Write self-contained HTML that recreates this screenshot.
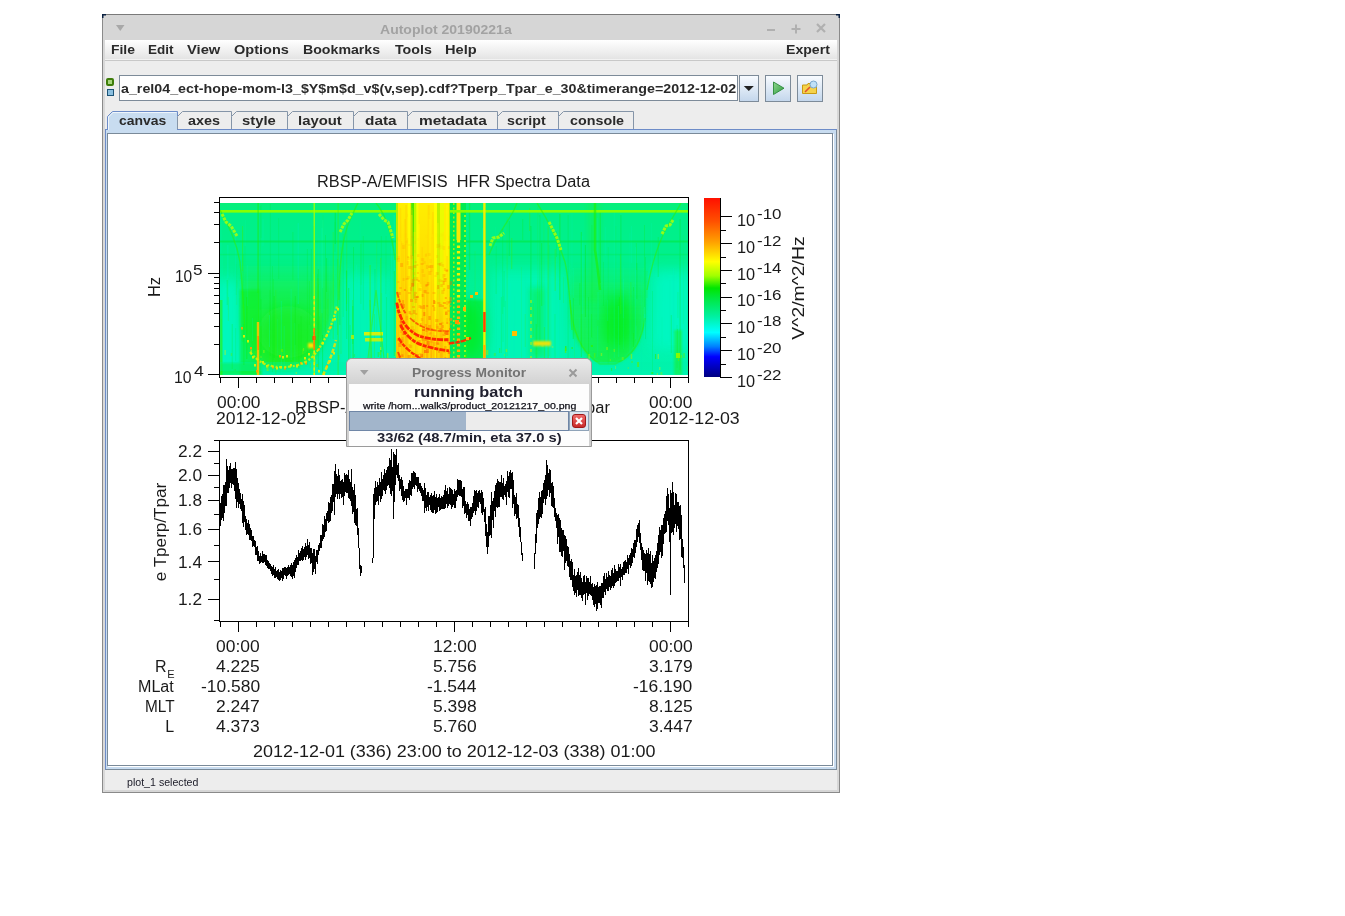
<!DOCTYPE html><html><head><meta charset="utf-8"><style>
*{margin:0;padding:0;box-sizing:border-box}
body{width:1345px;height:916px;background:#fff;position:relative;overflow:hidden;font-family:"Liberation Sans",sans-serif}
.a{position:absolute}
.t{position:absolute;white-space:pre;line-height:1}
</style></head><body>
<div class="a" style="left:102px;top:14px;width:738px;height:779px;background:#d8d8d8;border:1px solid #8a8a8a;border-top-color:#7a7a7a"></div><div class="a" style="left:103px;top:15px;width:736px;height:25px;background:#d6d6d6"></div><svg class="a" style="left:102px;top:14px" width="738" height="5"><path d="M0 0H4V1.5H1.5V4H0Z" fill="#0a2040"/><path d="M738 0H734V1.5H736.5V4H738Z" fill="#0a2040"/></svg><div class="t" style="left:379.50px;top:22.57px;font-size:13.5px;color:#a2a2a2;font-weight:bold;transform:scaleX(1.0386);transform-origin:0 0;">Autoplot 20190221a</div><svg class="a" style="left:115px;top:24px" width="12" height="10"><path d="M1 1 L9.5 1 L5.25 7 Z" fill="#a8a8a8"/></svg><div class="a" style="left:767px;top:29px;width:8px;height:2px;background:#b0b0b0"></div><svg class="a" style="left:790px;top:23px" width="12" height="12"><path d="M6 1.5V10.5M1.5 6H10.5" stroke="#b0b0b0" stroke-width="2"/></svg><svg class="a" style="left:815px;top:22px" width="12" height="12"><path d="M2 2L10 10M10 2L2 10" stroke="#b0b0b0" stroke-width="2.2"/></svg><div class="a" style="left:105px;top:40px;width:732px;height:19px;background:linear-gradient(#ffffff,#e4e4e4)"></div><div class="a" style="left:105px;top:59px;width:732px;height:1px;background:#f2f2f2"></div><div class="a" style="left:105px;top:60px;width:732px;height:1px;background:#c8c8c8"></div><div class="a" style="left:105px;top:61px;width:732px;height:729px;background:#ededed"></div><div class="t" style="left:111.20px;top:43.20px;font-size:13px;color:#2a2a2a;font-weight:bold;transform:scaleX(1.0702);transform-origin:0 0;">File</div><div class="t" style="left:148.20px;top:43.20px;font-size:13px;color:#2a2a2a;font-weight:bold;transform:scaleX(1.0379);transform-origin:0 0;">Edit</div><div class="t" style="left:186.90px;top:43.20px;font-size:13px;color:#2a2a2a;font-weight:bold;transform:scaleX(1.1343);transform-origin:0 0;">View</div><div class="t" style="left:234.40px;top:43.20px;font-size:13px;color:#2a2a2a;font-weight:bold;transform:scaleX(1.1167);transform-origin:0 0;">Options</div><div class="t" style="left:303.40px;top:43.20px;font-size:13px;color:#2a2a2a;font-weight:bold;transform:scaleX(1.0892);transform-origin:0 0;">Bookmarks</div><div class="t" style="left:394.60px;top:43.20px;font-size:13px;color:#2a2a2a;font-weight:bold;transform:scaleX(1.0930);transform-origin:0 0;">Tools</div><div class="t" style="left:445.00px;top:43.20px;font-size:13px;color:#2a2a2a;font-weight:bold;transform:scaleX(1.1228);transform-origin:0 0;">Help</div><div class="t" style="left:786.40px;top:43.20px;font-size:13px;color:#2a2a2a;font-weight:bold;transform:scaleX(1.0834);transform-origin:0 0;">Expert</div><div class="a" style="left:106px;top:78px;width:8px;height:8px;border:2px solid #3e7d0a;border-radius:2px;background:#a6d57c"></div><div class="a" style="left:107px;top:89px;width:7px;height:7px;border:1.5px solid #1d5477;background:#8cc0e0"></div><div class="a" style="left:119px;top:75px;width:619px;height:26px;background:#fff;border:1px solid #7d8b99;"></div><div class="t" style="left:121.00px;top:81.77px;font-size:13.5px;color:#2a2a2a;font-weight:bold;transform:scaleX(1.0563);transform-origin:0 0;">a_rel04_ect-hope-mom-l3_$Y$m$d_v$(v,sep).cdf?Tperp_Tpar_e_30&amp;timerange=2012-12-02</div><div class="a" style="left:739px;top:75px;width:20px;height:27px;background:linear-gradient(#f8fbff,#c4d7ec);border:1px solid #7d8b99"></div><svg class="a" style="left:743px;top:85px" width="12" height="8"><path d="M0.8 1 L10.8 1 L5.8 6 Z" fill="#222"/></svg><div class="a" style="left:765px;top:75px;width:26px;height:27px;background:linear-gradient(#f8fbff,#c4d7ec);border:1px solid #7d8b99"></div><svg class="a" style="left:770px;top:80px" width="16" height="16"><defs><linearGradient id="pg" x1="0" y1="0" x2="1" y2="1"><stop offset="0" stop-color="#8fd88f"/><stop offset="1" stop-color="#2e9a40"/></linearGradient></defs><path d="M3.5 2 L14 8.2 L3.5 14.5 Z" fill="url(#pg)" stroke="#2a8a3a" stroke-width="0.9"/></svg><div class="a" style="left:797px;top:75px;width:26px;height:27px;background:linear-gradient(#f8fbff,#c4d7ec);border:1px solid #7d8b99"></div><svg class="a" style="left:801px;top:80px" width="18" height="16"><path d="M1.5 5 L6 5 L7 3.5 L11 3.5 L11 5 L15.5 5 L15.5 13.5 L1.5 13.5 Z" fill="#f5d24a" stroke="#c99a12" stroke-width="1"/><path d="M4 12 L9 7" stroke="#e05030" stroke-width="1.6"/><circle cx="12.5" cy="4.5" r="3.5" fill="#bfe0f8" stroke="#7aa8cc" stroke-width="1"/></svg><div class="a" style="left:105px;top:129px;width:732px;height:641px;background:#c8dcf0;border:1px solid #6d8cc8;border-bottom-color:#7a8a99;border-right-color:#7a8a99"></div><div class="a" style="left:107px;top:133px;width:726px;height:633px;background:#fff;border:1px solid #7a8a99;box-shadow:1px 1px 0 #fff"></div><svg class="a" style="left:0;top:0" width="1345" height="916"><path d="M107.5 130 V116.5 L112.5 111.5 H177.5 V130" fill="#c8dcf0" stroke="#6d8cc8" stroke-width="1"/><path d="M108.5 130 V117 L113 112.5 H176.5" fill="none" stroke="#ffffff" stroke-width="1" opacity="0.7"/><path d="M177.5 129 V116.5 L182.5 111.5 H231.5 V129" fill="#ededed" stroke="#8595a8" stroke-width="1"/><path d="M231.5 129 V116.5 L236.5 111.5 H287.5 V129" fill="#ededed" stroke="#8595a8" stroke-width="1"/><path d="M287.5 129 V116.5 L292.5 111.5 H353.5 V129" fill="#ededed" stroke="#8595a8" stroke-width="1"/><path d="M353.5 129 V116.5 L358.5 111.5 H407.5 V129" fill="#ededed" stroke="#8595a8" stroke-width="1"/><path d="M407.5 129 V116.5 L412.5 111.5 H497.5 V129" fill="#ededed" stroke="#8595a8" stroke-width="1"/><path d="M497.5 129 V116.5 L502.5 111.5 H558.5 V129" fill="#ededed" stroke="#8595a8" stroke-width="1"/><path d="M558.5 129 V116.5 L563.5 111.5 H633.5 V129" fill="#ededed" stroke="#8595a8" stroke-width="1"/><path d="M105 129.5 H107.5 M177.5 129.5 H837" stroke="#6d8cc8" stroke-width="1"/></svg><div class="t" style="left:119.00px;top:114.10px;font-size:13px;color:#2a2a2a;font-weight:bold;transform:scaleX(1.0710);transform-origin:0 0;">canvas</div><div class="t" style="left:188.20px;top:114.10px;font-size:13px;color:#2a2a2a;font-weight:bold;transform:scaleX(1.1063);transform-origin:0 0;">axes</div><div class="t" style="left:242.00px;top:114.10px;font-size:13px;color:#2a2a2a;font-weight:bold;transform:scaleX(1.1404);transform-origin:0 0;">style</div><div class="t" style="left:298.40px;top:114.10px;font-size:13px;color:#2a2a2a;font-weight:bold;transform:scaleX(1.1441);transform-origin:0 0;">layout</div><div class="t" style="left:364.80px;top:114.10px;font-size:13px;color:#2a2a2a;font-weight:bold;transform:scaleX(1.1809);transform-origin:0 0;">data</div><div class="t" style="left:418.50px;top:114.10px;font-size:13px;color:#2a2a2a;font-weight:bold;transform:scaleX(1.1888);transform-origin:0 0;">metadata</div><div class="t" style="left:507.20px;top:114.10px;font-size:13px;color:#2a2a2a;font-weight:bold;transform:scaleX(1.0924);transform-origin:0 0;">script</div><div class="t" style="left:569.60px;top:114.10px;font-size:13px;color:#2a2a2a;font-weight:bold;transform:scaleX(1.1009);transform-origin:0 0;">console</div><div class="t" style="left:126.70px;top:776.69px;font-size:11px;color:#20202c;transform:scaleX(0.9652);transform-origin:0 0;">plot_1 selected</div><div class="a" style="left:105px;top:790px;width:734px;height:2px;background:#d6d6d6"></div><svg class="a" style="left:0;top:0" width="1345" height="916"><defs><clipPath id="spc"><rect x="220" y="203" width="468" height="172"/></clipPath><filter id="b3" x="-30%" y="-30%" width="160%" height="160%"><feGaussianBlur stdDeviation="3"/></filter><filter id="b6" x="-50%" y="-50%" width="200%" height="200%"><feGaussianBlur stdDeviation="7"/></filter><filter id="b1" x="-30%" y="-30%" width="160%" height="160%"><feGaussianBlur stdDeviation="0.8"/></filter><linearGradient id="sbg" x1="0" y1="0" x2="0" y2="1"><stop offset="0" stop-color="#08f078"/><stop offset="0.06" stop-color="#00f088"/><stop offset="0.35" stop-color="#00f08e"/><stop offset="0.6" stop-color="#00f29e"/><stop offset="1" stop-color="#00f4b0"/></linearGradient><linearGradient id="ycol" x1="0" y1="0" x2="0" y2="1"><stop offset="0" stop-color="#ffee00"/><stop offset="0.4" stop-color="#ffdc00"/><stop offset="0.7" stop-color="#ffc000"/><stop offset="1" stop-color="#ffa800"/></linearGradient><linearGradient id="bowlg" x1="0" y1="0" x2="0" y2="1"><stop offset="0" stop-color="#20f030" stop-opacity="0"/><stop offset="0.3" stop-color="#20f030" stop-opacity="0.6"/><stop offset="1" stop-color="#20f020" stop-opacity="0.95"/></linearGradient></defs><g clip-path="url(#spc)"><rect x="220" y="203" width="468" height="172" fill="url(#sbg)"/><g filter="url(#b6)" opacity="0.9"><rect x="212" y="280" width="28" height="100" fill="#00f8c0"/><rect x="342" y="275" width="48" height="105" fill="#00f6b8"/><rect x="492" y="270" width="72" height="110" fill="#00f6b8"/><rect x="652" y="270" width="40" height="80" fill="#00f8c4"/></g><g filter="url(#b3)"><path d="M240 258 L338 258 C338 290 334 315 325 335 C318 352 306 366 290 368 L268 368 C256 362 248 345 243 325 Z" fill="url(#bowlg)"/></g><filter id="b15" x="-30%" y="-30%" width="160%" height="160%"><feGaussianBlur stdDeviation="1.5"/></filter><path d="M569 262 L647 262 L645 318 C642 340 634 356 615 364 L600 364 C588 358 576 345 571 325 Z" fill="url(#bowlg)" filter="url(#b15)" opacity="0.7"/><path d="M570 300 C572 330 580 352 600 364 L615 364 C634 356 642 340 645 318" fill="none" stroke="#30f000" stroke-width="1.5" opacity="0.5"/><rect x="588" y="203" width="12" height="100" fill="#20f030" opacity="0.35" filter="url(#b3)"/><g filter="url(#b6)"><ellipse cx="288" cy="332" rx="30" ry="26" fill="#18ee10" opacity="0.5"/><ellipse cx="618" cy="322" rx="16" ry="28" fill="#00ec00" opacity="0.6"/><ellipse cx="470" cy="330" rx="13" ry="30" fill="#00ec10" opacity="0.7"/></g><rect x="240" y="290" width="20" height="85" fill="#10f020" opacity="0.55" filter="url(#b1)"/><rect x="220" y="363" width="42" height="12" fill="#10f030" opacity="0.6" filter="url(#b1)"/><rect x="220" y="300" width="2.5" height="75" fill="#30f000" opacity="0.6"/><rect x="220" y="362" width="468" height="9" fill="#00f2a8" opacity="0.35"/><rect x="313.6" y="226" width="1" height="52" fill="#00e800" opacity="0.29"/><rect x="468.4" y="292" width="1" height="26" fill="#00f4b0" opacity="0.17"/><rect x="558.0" y="278" width="1" height="81" fill="#00f0c0" opacity="0.32"/><rect x="319.5" y="262" width="1" height="37" fill="#00f4b0" opacity="0.14"/><rect x="555.4" y="289" width="1" height="26" fill="#00f0c0" opacity="0.13"/><rect x="481.1" y="257" width="0.7" height="56" fill="#00f4b0" opacity="0.23"/><rect x="641.3" y="280" width="0.7" height="93" fill="#00f0c0" opacity="0.17"/><rect x="650.9" y="223" width="0.7" height="124" fill="#00f4b0" opacity="0.34"/><rect x="529.0" y="208" width="1.3" height="23" fill="#40f000" opacity="0.31"/><rect x="258.0" y="257" width="1.3" height="28" fill="#00f0c0" opacity="0.12"/><rect x="374.3" y="269" width="1.3" height="37" fill="#00e800" opacity="0.17"/><rect x="340.5" y="254" width="1.3" height="97" fill="#00f0c0" opacity="0.23"/><rect x="246.1" y="297" width="1.3" height="62" fill="#10ee00" opacity="0.34"/><rect x="278.2" y="218" width="1" height="61" fill="#10ee00" opacity="0.15"/><rect x="317.1" y="274" width="1" height="82" fill="#10ee00" opacity="0.15"/><rect x="604.9" y="227" width="0.7" height="29" fill="#00f0c0" opacity="0.25"/><rect x="242.3" y="230" width="1" height="70" fill="#40f000" opacity="0.22"/><rect x="393.6" y="215" width="1.3" height="143" fill="#00f0c0" opacity="0.32"/><rect x="580.7" y="232" width="1.3" height="125" fill="#10ee00" opacity="0.29"/><rect x="269.5" y="290" width="1" height="40" fill="#10ee00" opacity="0.19"/><rect x="571.7" y="213" width="0.7" height="82" fill="#00f0c0" opacity="0.24"/><rect x="644.6" y="314" width="0.7" height="52" fill="#00f4b0" opacity="0.33"/><rect x="340.2" y="315" width="0.7" height="36" fill="#00f4b0" opacity="0.18"/><rect x="537.4" y="280" width="0.7" height="94" fill="#40f000" opacity="0.21"/><rect x="635.3" y="247" width="0.7" height="92" fill="#00f0c0" opacity="0.33"/><rect x="532.5" y="303" width="1.3" height="34" fill="#40f000" opacity="0.29"/><rect x="550.5" y="255" width="0.7" height="106" fill="#40f000" opacity="0.15"/><rect x="468.9" y="203" width="1.3" height="67" fill="#10ee00" opacity="0.30"/><rect x="316.1" y="298" width="1.3" height="62" fill="#40f000" opacity="0.24"/><rect x="510.1" y="283" width="0.7" height="75" fill="#00f0c0" opacity="0.29"/><rect x="687.8" y="305" width="0.7" height="24" fill="#00e800" opacity="0.22"/><rect x="392.8" y="274" width="1.3" height="97" fill="#00f4b0" opacity="0.19"/><rect x="574.1" y="329" width="0.7" height="41" fill="#40f000" opacity="0.18"/><rect x="374.0" y="314" width="1" height="57" fill="#40f000" opacity="0.25"/><rect x="554.6" y="249" width="1.3" height="42" fill="#40f000" opacity="0.31"/><rect x="547.5" y="226" width="1.3" height="137" fill="#40f000" opacity="0.33"/><rect x="636.2" y="263" width="1.3" height="36" fill="#00e800" opacity="0.18"/><rect x="227.2" y="245" width="1.3" height="74" fill="#00f0c0" opacity="0.29"/><rect x="486.6" y="271" width="1" height="73" fill="#00f4b0" opacity="0.22"/><rect x="297.7" y="278" width="0.7" height="24" fill="#00e800" opacity="0.20"/><rect x="327.6" y="299" width="0.7" height="29" fill="#40f000" opacity="0.28"/><rect x="596.9" y="218" width="1.3" height="44" fill="#00f0c0" opacity="0.20"/><rect x="481.9" y="228" width="1.3" height="91" fill="#00f0c0" opacity="0.34"/><rect x="470.4" y="297" width="0.7" height="27" fill="#10ee00" opacity="0.15"/><rect x="260.5" y="299" width="1" height="56" fill="#10ee00" opacity="0.32"/><rect x="555.5" y="281" width="0.7" height="76" fill="#00f4b0" opacity="0.20"/><rect x="244.7" y="246" width="1" height="88" fill="#10ee00" opacity="0.16"/><rect x="272.0" y="266" width="0.7" height="106" fill="#00e800" opacity="0.21"/><rect x="539.2" y="215" width="1.3" height="131" fill="#10ee00" opacity="0.22"/><rect x="591.1" y="314" width="0.7" height="23" fill="#10ee00" opacity="0.30"/><rect x="394.6" y="243" width="0.7" height="25" fill="#40f000" opacity="0.19"/><rect x="294.3" y="323" width="1" height="48" fill="#00f4b0" opacity="0.19"/><rect x="595.2" y="208" width="1" height="44" fill="#00f0c0" opacity="0.27"/><rect x="597.0" y="326" width="1.3" height="31" fill="#00f0c0" opacity="0.17"/><rect x="290.5" y="289" width="1.3" height="71" fill="#00f0c0" opacity="0.21"/><rect x="459.7" y="317" width="1" height="29" fill="#00f4b0" opacity="0.35"/><rect x="319.3" y="285" width="0.7" height="31" fill="#00f4b0" opacity="0.22"/><rect x="484.7" y="207" width="1.3" height="50" fill="#10ee00" opacity="0.19"/><rect x="682.9" y="235" width="0.7" height="89" fill="#40f000" opacity="0.12"/><rect x="521.2" y="267" width="0.7" height="103" fill="#40f000" opacity="0.16"/><rect x="329.2" y="258" width="0.7" height="66" fill="#00f4b0" opacity="0.21"/><rect x="294.8" y="296" width="1" height="49" fill="#00e800" opacity="0.26"/><rect x="644.1" y="225" width="0.7" height="82" fill="#10ee00" opacity="0.31"/><rect x="340.1" y="286" width="1.3" height="67" fill="#00f4b0" opacity="0.14"/><rect x="332.6" y="232" width="1.3" height="107" fill="#40f000" opacity="0.25"/><rect x="333.1" y="244" width="0.7" height="83" fill="#40f000" opacity="0.14"/><rect x="513.8" y="323" width="0.7" height="34" fill="#00f0c0" opacity="0.33"/><rect x="530.3" y="227" width="0.7" height="136" fill="#00f0c0" opacity="0.25"/><rect x="358.2" y="295" width="1" height="27" fill="#00f0c0" opacity="0.15"/><rect x="362.8" y="236" width="1" height="74" fill="#00e800" opacity="0.17"/><rect x="504.7" y="309" width="1" height="37" fill="#00f0c0" opacity="0.32"/><rect x="334.6" y="222" width="0.7" height="30" fill="#00e800" opacity="0.17"/><rect x="380.8" y="236" width="1" height="132" fill="#00e800" opacity="0.15"/><rect x="543.8" y="327" width="1.3" height="31" fill="#40f000" opacity="0.32"/><rect x="579.3" y="318" width="0.7" height="30" fill="#00f0c0" opacity="0.18"/><rect x="333.9" y="321" width="1.3" height="27" fill="#00f0c0" opacity="0.14"/><rect x="630.1" y="282" width="1.3" height="38" fill="#40f000" opacity="0.22"/><rect x="227.9" y="297" width="0.7" height="24" fill="#40f000" opacity="0.29"/><rect x="352.1" y="300" width="1" height="70" fill="#40f000" opacity="0.30"/><rect x="573.2" y="268" width="0.7" height="41" fill="#00f4b0" opacity="0.33"/><rect x="317.5" y="278" width="1" height="42" fill="#40f000" opacity="0.35"/><rect x="259.8" y="206" width="1" height="104" fill="#10ee00" opacity="0.16"/><rect x="633.3" y="287" width="0.7" height="60" fill="#00e800" opacity="0.30"/><rect x="322.1" y="288" width="1" height="87" fill="#00e800" opacity="0.31"/><rect x="631.3" y="226" width="0.7" height="37" fill="#00f0c0" opacity="0.28"/><rect x="269.0" y="310" width="1.3" height="54" fill="#40f000" opacity="0.14"/><rect x="345.9" y="270" width="1" height="41" fill="#10ee00" opacity="0.29"/><rect x="236.4" y="280" width="1" height="25" fill="#40f000" opacity="0.15"/><rect x="356.1" y="265" width="1" height="97" fill="#00f4b0" opacity="0.31"/><rect x="338.1" y="235" width="0.7" height="42" fill="#00f0c0" opacity="0.16"/><rect x="458.9" y="305" width="1.3" height="32" fill="#00f0c0" opacity="0.24"/><rect x="326.1" y="258" width="1" height="34" fill="#00e800" opacity="0.29"/><rect x="563.3" y="277" width="0.7" height="26" fill="#40f000" opacity="0.22"/><rect x="269.9" y="204" width="0.7" height="152" fill="#00e800" opacity="0.19"/><rect x="273.6" y="296" width="1.3" height="62" fill="#10ee00" opacity="0.28"/><rect x="308.9" y="281" width="1" height="44" fill="#10ee00" opacity="0.21"/><rect x="455.8" y="259" width="1.3" height="113" fill="#40f000" opacity="0.26"/><rect x="322.1" y="220" width="1.3" height="115" fill="#00f4b0" opacity="0.33"/><rect x="618.2" y="306" width="1" height="51" fill="#00f4b0" opacity="0.29"/><rect x="669.5" y="280" width="1.3" height="62" fill="#00f4b0" opacity="0.19"/><rect x="227.7" y="278" width="0.7" height="32" fill="#40f000" opacity="0.14"/><rect x="369.6" y="289" width="0.7" height="39" fill="#00f0c0" opacity="0.25"/><rect x="544.3" y="301" width="1" height="25" fill="#00f4b0" opacity="0.13"/><rect x="645.0" y="257" width="0.7" height="82" fill="#00e800" opacity="0.26"/><rect x="474.6" y="251" width="1" height="81" fill="#40f000" opacity="0.14"/><rect x="315.4" y="302" width="1.3" height="27" fill="#00f0c0" opacity="0.14"/><rect x="222.1" y="253" width="0.7" height="81" fill="#00f4b0" opacity="0.26"/><rect x="677.1" y="329" width="0.7" height="27" fill="#10ee00" opacity="0.27"/><rect x="679.4" y="219" width="1.3" height="151" fill="#00e800" opacity="0.24"/><rect x="342.7" y="234" width="1" height="83" fill="#10ee00" opacity="0.19"/><rect x="567.6" y="215" width="1" height="155" fill="#00e800" opacity="0.17"/><rect x="524.8" y="266" width="0.7" height="47" fill="#00f4b0" opacity="0.15"/><rect x="599.6" y="212" width="1.3" height="71" fill="#10ee00" opacity="0.33"/><rect x="386.3" y="297" width="0.7" height="77" fill="#00e800" opacity="0.31"/><rect x="559.0" y="321" width="1" height="35" fill="#00f4b0" opacity="0.23"/><rect x="556.1" y="231" width="0.7" height="26" fill="#10ee00" opacity="0.35"/><rect x="635.7" y="326" width="1" height="46" fill="#00f4b0" opacity="0.19"/><rect x="504.9" y="301" width="1" height="59" fill="#00e800" opacity="0.13"/><rect x="235.2" y="235" width="1" height="67" fill="#00f0c0" opacity="0.30"/><rect x="353.0" y="247" width="1" height="116" fill="#00e800" opacity="0.25"/><rect x="394.5" y="310" width="0.7" height="50" fill="#00f0c0" opacity="0.24"/><rect x="257.1" y="293" width="1.3" height="65" fill="#00f0c0" opacity="0.19"/><rect x="220.1" y="225" width="0.7" height="147" fill="#00f0c0" opacity="0.16"/><rect x="535.6" y="324" width="1.3" height="46" fill="#10ee00" opacity="0.32"/><rect x="360.3" y="244" width="1" height="60" fill="#10ee00" opacity="0.21"/><rect x="297.6" y="223" width="1.3" height="81" fill="#00f0c0" opacity="0.31"/><rect x="514.8" y="296" width="0.7" height="30" fill="#00f4b0" opacity="0.28"/><rect x="242.6" y="254" width="1" height="88" fill="#10ee00" opacity="0.17"/><rect x="275.1" y="290" width="1.3" height="84" fill="#40f000" opacity="0.19"/><rect x="677.4" y="292" width="1" height="26" fill="#10ee00" opacity="0.16"/><rect x="334.4" y="255" width="0.7" height="116" fill="#00f0c0" opacity="0.16"/><rect x="559.2" y="214" width="1.3" height="86" fill="#10ee00" opacity="0.34"/><rect x="456.6" y="324" width="1.3" height="40" fill="#40f000" opacity="0.32"/><rect x="349.6" y="325" width="1" height="39" fill="#10ee00" opacity="0.25"/><rect x="543.4" y="220" width="1" height="85" fill="#40f000" opacity="0.16"/><rect x="541.3" y="265" width="1" height="74" fill="#00f4b0" opacity="0.26"/><rect x="584.6" y="264" width="0.7" height="107" fill="#40f000" opacity="0.15"/><rect x="635.9" y="243" width="0.7" height="27" fill="#10ee00" opacity="0.32"/><rect x="277.0" y="319" width="0.7" height="36" fill="#00f4b0" opacity="0.15"/><rect x="495.5" y="227" width="0.7" height="142" fill="#00f0c0" opacity="0.20"/><rect x="676.7" y="325" width="0.7" height="43" fill="#00e800" opacity="0.17"/><rect x="502.4" y="229" width="0.7" height="85" fill="#00e800" opacity="0.23"/><rect x="607.8" y="247" width="1" height="117" fill="#10ee00" opacity="0.12"/><rect x="298.4" y="324" width="1" height="45" fill="#10ee00" opacity="0.33"/><rect x="352.1" y="306" width="1.3" height="38" fill="#10ee00" opacity="0.28"/><rect x="376.4" y="241" width="0.7" height="93" fill="#40f000" opacity="0.23"/><rect x="339.3" y="280" width="1" height="45" fill="#00e800" opacity="0.28"/><rect x="652.3" y="291" width="0.7" height="80" fill="#00e800" opacity="0.21"/><rect x="391.0" y="246" width="1.3" height="49" fill="#00f0c0" opacity="0.33"/><rect x="657.6" y="237" width="1.3" height="40" fill="#10ee00" opacity="0.19"/><rect x="646.6" y="271" width="0.7" height="27" fill="#40f000" opacity="0.30"/><rect x="538.6" y="217" width="0.7" height="74" fill="#00f0c0" opacity="0.32"/><rect x="245.1" y="220" width="1" height="54" fill="#00f4b0" opacity="0.16"/><rect x="524.7" y="314" width="1" height="33" fill="#40f000" opacity="0.23"/><rect x="591.3" y="225" width="1.3" height="113" fill="#00e800" opacity="0.13"/><rect x="235.4" y="328" width="0.7" height="33" fill="#00e800" opacity="0.19"/><rect x="385.6" y="236" width="0.7" height="58" fill="#10ee00" opacity="0.18"/><rect x="272.9" y="279" width="0.7" height="81" fill="#10ee00" opacity="0.27"/><rect x="541.0" y="243" width="1.3" height="63" fill="#10ee00" opacity="0.31"/><rect x="629.4" y="233" width="1" height="134" fill="#00f4b0" opacity="0.18"/><rect x="670.8" y="315" width="1" height="38" fill="#10ee00" opacity="0.24"/><rect x="554.6" y="314" width="0.7" height="60" fill="#10ee00" opacity="0.25"/><rect x="555.9" y="225" width="1" height="148" fill="#00f0c0" opacity="0.12"/><rect x="260.8" y="205" width="0.7" height="33" fill="#00e800" opacity="0.14"/><rect x="558.5" y="320" width="1" height="48" fill="#00f0c0" opacity="0.16"/><rect x="242.0" y="226" width="1" height="45" fill="#40f000" opacity="0.33"/><rect x="385.9" y="291" width="1.3" height="63" fill="#00f0c0" opacity="0.13"/><rect x="321.3" y="228" width="1.3" height="85" fill="#00f0c0" opacity="0.27"/><rect x="506.5" y="217" width="1.3" height="139" fill="#40f000" opacity="0.17"/><rect x="235.8" y="264" width="0.7" height="31" fill="#10ee00" opacity="0.15"/><rect x="513.1" y="310" width="0.7" height="46" fill="#00f0c0" opacity="0.30"/><rect x="317.8" y="269" width="1.3" height="100" fill="#00e800" opacity="0.26"/><rect x="537.5" y="261" width="1" height="46" fill="#00f4b0" opacity="0.24"/><rect x="280.8" y="301" width="1" height="73" fill="#00f4b0" opacity="0.33"/><rect x="571.9" y="298" width="0.7" height="65" fill="#00f4b0" opacity="0.32"/><rect x="252.0" y="318" width="0.7" height="23" fill="#00f4b0" opacity="0.32"/><rect x="467.2" y="269" width="0.7" height="56" fill="#00f0c0" opacity="0.18"/><rect x="306.9" y="249" width="0.7" height="116" fill="#00e800" opacity="0.26"/><rect x="572.7" y="298" width="1.3" height="41" fill="#10ee00" opacity="0.30"/><rect x="383.3" y="311" width="1" height="62" fill="#00f0c0" opacity="0.27"/><rect x="318.2" y="238" width="1.3" height="46" fill="#00f4b0" opacity="0.14"/><rect x="597.4" y="292" width="1.3" height="28" fill="#00f0c0" opacity="0.18"/><rect x="661.8" y="317" width="1" height="28" fill="#00f4b0" opacity="0.29"/><rect x="464.2" y="239" width="1" height="119" fill="#00e800" opacity="0.29"/><rect x="511.0" y="238" width="1.3" height="31" fill="#40f000" opacity="0.31"/><rect x="503.5" y="271" width="1.3" height="36" fill="#00e800" opacity="0.14"/><rect x="269.0" y="315" width="1" height="32" fill="#00f4b0" opacity="0.30"/><rect x="630.6" y="297" width="0.7" height="77" fill="#00f4b0" opacity="0.22"/><rect x="622.9" y="279" width="0.7" height="39" fill="#00f0c0" opacity="0.28"/><rect x="231.6" y="324" width="1.3" height="45" fill="#10ee00" opacity="0.19"/><rect x="483.4" y="304" width="1" height="49" fill="#00e800" opacity="0.17"/><rect x="603.3" y="262" width="0.7" height="44" fill="#00e800" opacity="0.17"/><rect x="260.6" y="251" width="0.7" height="75" fill="#00f4b0" opacity="0.17"/><rect x="359.6" y="217" width="1" height="143" fill="#00f0c0" opacity="0.15"/><rect x="607.1" y="321" width="1.3" height="22" fill="#10ee00" opacity="0.19"/><rect x="313.2" y="274" width="1" height="79" fill="#00f4b0" opacity="0.33"/><rect x="502.7" y="296" width="0.7" height="46" fill="#10ee00" opacity="0.21"/><rect x="632.9" y="291" width="1.3" height="42" fill="#00f4b0" opacity="0.13"/><rect x="537.3" y="206" width="1.3" height="121" fill="#40f000" opacity="0.13"/><rect x="322.4" y="215" width="1" height="103" fill="#40f000" opacity="0.12"/><rect x="325.3" y="235" width="0.7" height="98" fill="#10ee00" opacity="0.27"/><rect x="366.5" y="286" width="1.3" height="83" fill="#00f0c0" opacity="0.13"/><rect x="579.3" y="283" width="1" height="22" fill="#10ee00" opacity="0.25"/><rect x="644.0" y="314" width="1.3" height="25" fill="#00f0c0" opacity="0.19"/><rect x="346.2" y="219" width="1" height="85" fill="#40f000" opacity="0.26"/><rect x="588.1" y="297" width="0.7" height="74" fill="#00e800" opacity="0.31"/><rect x="672.9" y="268" width="1.3" height="65" fill="#00f0c0" opacity="0.31"/><rect x="619.1" y="297" width="1" height="48" fill="#10ee00" opacity="0.33"/><rect x="237.1" y="288" width="1.3" height="58" fill="#00f4b0" opacity="0.26"/><rect x="314.4" y="314" width="0.7" height="41" fill="#10ee00" opacity="0.16"/><rect x="584.9" y="245" width="1" height="72" fill="#00e800" opacity="0.35"/><rect x="500.9" y="297" width="0.7" height="56" fill="#10ee00" opacity="0.29"/><rect x="292.2" y="232" width="1.3" height="48" fill="#10ee00" opacity="0.15"/><rect x="340.5" y="247" width="1" height="107" fill="#40f000" opacity="0.25"/><rect x="620.2" y="215" width="1.3" height="90" fill="#00e800" opacity="0.21"/><rect x="522.2" y="219" width="1" height="21" fill="#10ee00" opacity="0.24"/><rect x="380.0" y="258" width="1.3" height="102" fill="#40f000" opacity="0.32"/><rect x="393.7" y="232" width="1.3" height="109" fill="#00f0c0" opacity="0.28"/><rect x="508.7" y="221" width="1.3" height="35" fill="#00e800" opacity="0.20"/><rect x="237.2" y="290" width="0.7" height="39" fill="#00f0c0" opacity="0.29"/><rect x="334.6" y="210" width="1.3" height="34" fill="#00e800" opacity="0.32"/><rect x="464.1" y="241" width="0.7" height="31" fill="#40f000" opacity="0.16"/><rect x="283.6" y="326" width="1.3" height="40" fill="#00f0c0" opacity="0.18"/><rect x="613.7" y="212" width="1" height="146" fill="#00f4b0" opacity="0.28"/><rect x="380.9" y="293" width="1.3" height="56" fill="#40f000" opacity="0.15"/><rect x="226.7" y="280" width="1" height="25" fill="#10ee00" opacity="0.24"/><rect x="465.9" y="316" width="1.3" height="45" fill="#40f000" opacity="0.22"/><rect x="312.5" y="280" width="0.7" height="43" fill="#40f000" opacity="0.12"/><rect x="495.6" y="246" width="1" height="48" fill="#10ee00" opacity="0.19"/><rect x="262.4" y="219" width="1.3" height="27" fill="#00f0c0" opacity="0.20"/><rect x="615.5" y="226" width="0.7" height="112" fill="#10ee00" opacity="0.13"/><rect x="241.6" y="305" width="1" height="36" fill="#40f000" opacity="0.18"/><rect x="393.7" y="271" width="1.3" height="85" fill="#10ee00" opacity="0.31"/><rect x="348.2" y="288" width="1" height="80" fill="#00e800" opacity="0.34"/><rect x="220.8" y="213" width="0.7" height="106" fill="#00f4b0" opacity="0.33"/><rect x="530.2" y="226" width="1.3" height="90" fill="#00e800" opacity="0.28"/><rect x="336.9" y="259" width="1" height="76" fill="#10ee00" opacity="0.21"/><rect x="581.7" y="236" width="1.3" height="78" fill="#00f4b0" opacity="0.24"/><rect x="562.2" y="292" width="0.7" height="55" fill="#00f0c0" opacity="0.25"/><rect x="652.9" y="256" width="1" height="86" fill="#00f0c0" opacity="0.24"/><rect x="360.6" y="242" width="1" height="43" fill="#10ee00" opacity="0.14"/><rect x="243.4" y="324" width="1" height="41" fill="#10ee00" opacity="0.32"/><rect x="619.9" y="254" width="1.3" height="60" fill="#40f000" opacity="0.23"/><rect x="245.1" y="274" width="0.7" height="67" fill="#00f4b0" opacity="0.13"/><rect x="247.4" y="265" width="0.7" height="41" fill="#00f0c0" opacity="0.28"/><rect x="548.8" y="245" width="0.7" height="111" fill="#00e800" opacity="0.15"/><rect x="300.7" y="316" width="0.7" height="42" fill="#00e800" opacity="0.25"/><rect x="623.0" y="267" width="0.7" height="82" fill="#00f0c0" opacity="0.19"/><rect x="607.1" y="300" width="1" height="21" fill="#00f0c0" opacity="0.15"/><rect x="310.9" y="249" width="1" height="51" fill="#10ee00" opacity="0.19"/><rect x="346.2" y="271" width="1" height="68" fill="#00e800" opacity="0.26"/><rect x="453.6" y="274" width="0.7" height="28" fill="#00f0c0" opacity="0.16"/><rect x="220" y="210" width="468" height="2.6" fill="#88ff00"/><rect x="220" y="240.5" width="468" height="2" fill="#00e840" opacity="0.6"/><rect x="220" y="253.8" width="468" height="1.5" fill="#00ea50" opacity="0.35"/><path d="M220 210 C226 222 236 238 240 262 C242 280 243 300 245 330" fill="none" stroke="#30f000" stroke-width="1.4" opacity="0.5"/><path d="M339 300 C339 270 342 236 350 220 C354 212 356 206 358 203" fill="none" stroke="#30f000" stroke-width="1.4" opacity="0.5"/><path d="M376 203 C386 215 392 232 395 260" fill="none" stroke="#30f000" stroke-width="1.4" opacity="0.5"/><path d="M489 255 C495 238 508 222 514 210 L517 203" fill="none" stroke="#30f000" stroke-width="1.4" opacity="0.5"/><path d="M537 203 C548 220 558 240 565 262 C569 280 570 300 572 330" fill="none" stroke="#30f000" stroke-width="1.4" opacity="0.5"/><path d="M647 290 C652 262 660 238 670 222 C676 212 679 207 681 203" fill="none" stroke="#30f000" stroke-width="1.4" opacity="0.5"/><path d="M595 203 L595 250 C597 262 599 280 600 290" fill="none" stroke="#20f000" stroke-width="2.5" opacity="0.6"/><path d="M222 214 L226 222 L231 226 L237 236" fill="none" stroke="#b8ff00" stroke-width="3" stroke-dasharray="3 1" opacity="0.8"/><path d="M340 232 L344 224 L348 220 L352 213" fill="none" stroke="#b8ff00" stroke-width="3" stroke-dasharray="3 1" opacity="0.8"/><path d="M379 214 L384 220 L388 222 L393 238" fill="none" stroke="#b8ff00" stroke-width="3" stroke-dasharray="3 1" opacity="0.8"/><path d="M490 246 L493 238 L499 237 L504 233" fill="none" stroke="#b8ff00" stroke-width="3" stroke-dasharray="3 1" opacity="0.8"/><path d="M549 222 L553 230 L557 238 L561 250" fill="none" stroke="#b8ff00" stroke-width="3" stroke-dasharray="3 1" opacity="0.8"/><path d="M662 234 L666 226 L670 225 L673 220" fill="none" stroke="#b8ff00" stroke-width="3" stroke-dasharray="3 1" opacity="0.8"/><rect x="313.6" y="203" width="1.2" height="172" fill="#a8ff00"/><path d="M314.2 296V375" stroke="#ffe000" stroke-width="1.3" stroke-dasharray="3 2.5"/><rect x="257.4" y="203" width="1.4" height="172" fill="#20f000" opacity="0.5"/><rect x="256.8" y="322" width="2.4" height="53" fill="#ffc000" opacity="0.9"/><rect x="257.4" y="336" width="1.6" height="14" fill="#ff8000" opacity="0.8"/><rect x="450" y="203" width="16" height="172" fill="#00e840" opacity="0.7"/><rect x="466" y="300" width="18" height="75" fill="#00ec20" opacity="0.55" filter="url(#b1)"/><path d="M453.8 203V375" stroke="#c0f000" stroke-width="1.3" stroke-dasharray="2 2.5"/><rect x="456.5" y="203" width="4" height="37" fill="#f8e800"/><path d="M458.5 240V300" stroke="#f0f000" stroke-width="3.2" stroke-dasharray="2.5 3"/><path d="M458.5 300V375" stroke="#ffb000" stroke-width="3.2" stroke-dasharray="2.5 3"/><path d="M465 210V375" stroke="#d8ff00" stroke-width="1.4" stroke-dasharray="2 3"/><rect x="449" y="210" width="17" height="2.6" fill="#88ff00"/><rect x="483.2" y="203" width="2.4" height="172" fill="#f0f000"/><rect x="483.2" y="312" width="2.4" height="20" fill="#ff4000"/><rect x="483.2" y="345" width="2.4" height="30" fill="#ffb000"/><rect x="396" y="203" width="54" height="172" fill="url(#ycol)"/><linearGradient id="sfade" x1="0" y1="0" x2="0" y2="1"><stop offset="0" stop-color="#fff" stop-opacity="1"/><stop offset="0.45" stop-color="#fff" stop-opacity="0.9"/><stop offset="0.75" stop-color="#fff" stop-opacity="0.15"/><stop offset="1" stop-color="#fff" stop-opacity="0.1"/></linearGradient><mask id="smask"><rect x="390" y="203" width="70" height="172" fill="url(#sfade)"/></mask><g mask="url(#smask)"><rect x="396" y="203" width="2" height="172" fill="#a0f000" opacity="0.85"/><rect x="408" y="203" width="2" height="172" fill="#ffff00" opacity="0.85"/><rect x="410.5" y="203" width="1" height="172" fill="#b0f000" opacity="0.85"/><rect x="411.2" y="203" width="2.8" height="172" fill="#28e800" opacity="0.85"/><rect x="414" y="203" width="2" height="172" fill="#a8ff00" opacity="0.85"/><rect x="416" y="203" width="2" height="172" fill="#e0ff00" opacity="0.85"/><rect x="434" y="203" width="3" height="172" fill="#ffff00" opacity="0.85"/><rect x="437" y="203" width="3" height="172" fill="#b0f000" opacity="0.85"/><rect x="440" y="203" width="4" height="172" fill="#e8ff00" opacity="0.85"/><rect x="444" y="203" width="5" height="172" fill="#fff000" opacity="0.85"/><rect x="449" y="203" width="1" height="172" fill="#a0f000" opacity="0.85"/></g><rect x="417" y="203" width="1.5" height="172" fill="#ffff00" opacity="0.7"/><rect x="434.5" y="203" width="1.5" height="172" fill="#ffff00" opacity="0.7"/><rect x="446.6" y="237" width="1.5" height="138" fill="#ffff00" opacity="0.26"/><rect x="421.5" y="247" width="1.5" height="128" fill="#ffc000" opacity="0.26"/><rect x="422.1" y="286" width="2" height="89" fill="#ffd000" opacity="0.40"/><rect x="404.4" y="219" width="1.5" height="156" fill="#ffc000" opacity="0.36"/><rect x="402.3" y="292" width="1" height="83" fill="#fff000" opacity="0.20"/><rect x="399.6" y="208" width="1.5" height="167" fill="#ffd000" opacity="0.45"/><rect x="428.2" y="215" width="2" height="160" fill="#ffff00" opacity="0.24"/><rect x="438.6" y="247" width="1" height="128" fill="#ffff00" opacity="0.40"/><rect x="438.5" y="288" width="1" height="87" fill="#ffd000" opacity="0.50"/><rect x="398.6" y="206" width="2" height="169" fill="#ffe800" opacity="0.22"/><rect x="407.8" y="265" width="2" height="110" fill="#ffe800" opacity="0.35"/><rect x="411.0" y="215" width="1.5" height="160" fill="#fff000" opacity="0.41"/><rect x="399.3" y="238" width="2" height="137" fill="#ffe800" opacity="0.41"/><rect x="396.4" y="260" width="2" height="115" fill="#ffff00" opacity="0.25"/><rect x="401.2" y="241" width="1" height="134" fill="#ffd000" opacity="0.42"/><rect x="443.4" y="241" width="2" height="134" fill="#ffff00" opacity="0.30"/><rect x="413.6" y="232" width="2" height="143" fill="#ffe800" opacity="0.41"/><rect x="438.2" y="294" width="2" height="81" fill="#ffd000" opacity="0.48"/><rect x="425.8" y="285" width="2" height="90" fill="#ffd000" opacity="0.29"/><rect x="428.2" y="293" width="1" height="82" fill="#ffd000" opacity="0.31"/><rect x="411.4" y="210" width="1" height="165" fill="#ffc000" opacity="0.41"/><rect x="416.3" y="295" width="2" height="80" fill="#ffc000" opacity="0.36"/><rect x="445.7" y="275" width="2" height="100" fill="#ffff00" opacity="0.48"/><rect x="403.0" y="243" width="2" height="132" fill="#ffe800" opacity="0.30"/><rect x="417.3" y="255" width="1.5" height="120" fill="#ffe800" opacity="0.32"/><rect x="402.2" y="245" width="1.5" height="130" fill="#ffc000" opacity="0.36"/><rect x="433.1" y="237" width="1" height="138" fill="#ffe800" opacity="0.23"/><rect x="408.3" y="261" width="2" height="114" fill="#ffe800" opacity="0.38"/><rect x="445.9" y="205" width="2" height="170" fill="#ffff00" opacity="0.44"/><rect x="407.2" y="214" width="1" height="161" fill="#ffd000" opacity="0.21"/><rect x="413.2" y="291" width="2" height="84" fill="#ffc000" opacity="0.26"/><rect x="418.0" y="224" width="2" height="151" fill="#ffff00" opacity="0.42"/><rect x="419.2" y="250" width="1" height="125" fill="#ffe800" opacity="0.39"/><rect x="415.7" y="280" width="1" height="95" fill="#ffff00" opacity="0.41"/><rect x="445.1" y="280" width="2" height="95" fill="#ffe800" opacity="0.29"/><rect x="432.4" y="212" width="1" height="163" fill="#ffc000" opacity="0.40"/><rect x="446.2" y="256" width="2" height="119" fill="#ffd000" opacity="0.46"/><rect x="408.9" y="275" width="1" height="100" fill="#ffe800" opacity="0.34"/><rect x="406.8" y="217" width="1" height="158" fill="#ffff00" opacity="0.41"/><rect x="425.0" y="294" width="1" height="81" fill="#ffff00" opacity="0.45"/><rect x="407.1" y="238" width="1" height="137" fill="#ffc000" opacity="0.23"/><rect x="405.3" y="205" width="1.5" height="170" fill="#ffc000" opacity="0.33"/><rect x="408.5" y="286" width="1.5" height="89" fill="#ffff00" opacity="0.33"/><rect x="402.0" y="210" width="1" height="165" fill="#fff000" opacity="0.22"/><rect x="432.2" y="234" width="1.5" height="141" fill="#ffe800" opacity="0.38"/><rect x="436.9" y="287" width="1" height="88" fill="#ffc000" opacity="0.30"/><rect x="404.3" y="226" width="1" height="149" fill="#ffe800" opacity="0.28"/><rect x="428.4" y="219" width="2" height="156" fill="#ffff00" opacity="0.44"/><rect x="442.6" y="232" width="2" height="143" fill="#ffe800" opacity="0.40"/><rect x="411.6" y="208" width="1" height="167" fill="#ffd000" opacity="0.26"/><rect x="420.0" y="287" width="2" height="88" fill="#ffff00" opacity="0.44"/><rect x="427.7" y="205" width="2" height="170" fill="#ffc000" opacity="0.32"/><rect x="417.0" y="283" width="1.5" height="92" fill="#ffc000" opacity="0.41"/><rect x="437.1" y="223" width="1.5" height="152" fill="#ffff00" opacity="0.30"/><rect x="406.0" y="290" width="2" height="85" fill="#ffc000" opacity="0.47"/><rect x="417.1" y="243" width="1.5" height="132" fill="#ffe800" opacity="0.22"/><rect x="419.5" y="284" width="2" height="91" fill="#ffff00" opacity="0.48"/><rect x="415.7" y="273" width="1" height="102" fill="#ffe800" opacity="0.21"/><rect x="431.8" y="234" width="1" height="141" fill="#fff000" opacity="0.32"/><rect x="439.1" y="237" width="1" height="138" fill="#ffd000" opacity="0.21"/><rect x="410.2" y="300" width="1.5" height="75" fill="#ffe800" opacity="0.49"/><rect x="410.1" y="246" width="2" height="129" fill="#ffd000" opacity="0.45"/><rect x="412.2" y="256" width="1" height="119" fill="#ffff00" opacity="0.41"/><rect x="447.3" y="286" width="1.5" height="89" fill="#ffd000" opacity="0.25"/><rect x="409.5" y="204" width="1" height="171" fill="#ffff00" opacity="0.38"/><rect x="447.9" y="212" width="1" height="163" fill="#fff000" opacity="0.46"/><rect x="413.0" y="299" width="2" height="76" fill="#fff000" opacity="0.46"/><rect x="412.0" y="279" width="2" height="96" fill="#ffe800" opacity="0.23"/><rect x="420.3" y="294" width="1" height="81" fill="#fff000" opacity="0.26"/><rect x="423.1" y="281" width="2" height="94" fill="#ffd000" opacity="0.49"/><rect x="400.5" y="355" width="3" height="2" fill="#ff9000" opacity="0.34"/><rect x="397.6" y="256" width="2" height="3" fill="#ff6000" opacity="0.11"/><rect x="401.2" y="243" width="2.5" height="2" fill="#ff9000" opacity="0.10"/><rect x="407.9" y="292" width="3" height="2" fill="#ff8000" opacity="0.33"/><rect x="408.2" y="266" width="3" height="3" fill="#ff6000" opacity="0.23"/><rect x="445.7" y="332" width="3" height="3" fill="#ff9000" opacity="0.52"/><rect x="444.1" y="346" width="2.5" height="3" fill="#ffa000" opacity="0.65"/><rect x="436.2" y="255" width="2" height="3" fill="#ffa000" opacity="0.20"/><rect x="405.6" y="316" width="2.5" height="4" fill="#ffa000" opacity="0.53"/><rect x="431.9" y="232" width="2" height="4" fill="#ff8000" opacity="0.01"/><rect x="432.5" y="292" width="3" height="2" fill="#ff9000" opacity="0.35"/><rect x="440.3" y="284" width="2.5" height="3" fill="#ffa000" opacity="0.43"/><rect x="418.5" y="305" width="3" height="3" fill="#ffa000" opacity="0.50"/><rect x="443.6" y="274" width="2" height="3" fill="#ff6000" opacity="0.22"/><rect x="441.6" y="305" width="2.5" height="2" fill="#ff8000" opacity="0.44"/><rect x="408.6" y="311" width="2.5" height="3" fill="#ffa000" opacity="0.65"/><rect x="447.6" y="366" width="2" height="2" fill="#ffa000" opacity="0.65"/><rect x="447.7" y="351" width="3" height="3" fill="#ff6000" opacity="0.55"/><rect x="433.3" y="307" width="2" height="4" fill="#ff9000" opacity="0.46"/><rect x="401.8" y="245" width="3" height="4" fill="#ff6000" opacity="0.10"/><rect x="419.6" y="323" width="2" height="4" fill="#ff6000" opacity="0.37"/><rect x="399.8" y="320" width="2.5" height="3" fill="#ff8000" opacity="0.67"/><rect x="408.9" y="368" width="3" height="2" fill="#ff8000" opacity="0.46"/><rect x="448.9" y="360" width="2.5" height="3" fill="#ffa000" opacity="0.68"/><rect x="443.9" y="268" width="2" height="3" fill="#ff9000" opacity="0.29"/><rect x="443.1" y="288" width="2" height="3" fill="#ff8000" opacity="0.31"/><rect x="399.3" y="287" width="2.5" height="2" fill="#ff9000" opacity="0.37"/><rect x="428.0" y="266" width="2.5" height="2" fill="#ff9000" opacity="0.24"/><rect x="402.1" y="300" width="2" height="4" fill="#ff9000" opacity="0.59"/><rect x="422.7" y="261" width="3" height="3" fill="#ffa000" opacity="0.23"/><rect x="424.0" y="350" width="2.5" height="3" fill="#ff6000" opacity="0.68"/><rect x="406.8" y="261" width="2" height="4" fill="#ff9000" opacity="0.21"/><rect x="415.1" y="358" width="3" height="4" fill="#ff6000" opacity="0.58"/><rect x="411.8" y="362" width="2.5" height="3" fill="#ff6000" opacity="0.31"/><rect x="410.5" y="255" width="3" height="4" fill="#ff9000" opacity="0.19"/><rect x="416.9" y="254" width="2.5" height="3" fill="#ff8000" opacity="0.17"/><rect x="425.5" y="351" width="3" height="2" fill="#ff9000" opacity="0.49"/><rect x="438.8" y="263" width="2" height="3" fill="#ff8000" opacity="0.28"/><rect x="412.3" y="329" width="2.5" height="4" fill="#ff9000" opacity="0.41"/><rect x="420.6" y="263" width="3" height="2" fill="#ff6000" opacity="0.22"/><rect x="442.7" y="281" width="2" height="4" fill="#ff6000" opacity="0.32"/><rect x="424.9" y="254" width="2" height="3" fill="#ff8000" opacity="0.13"/><rect x="424.3" y="367" width="3" height="3" fill="#ff8000" opacity="0.32"/><rect x="433.4" y="347" width="3" height="2" fill="#ff9000" opacity="0.32"/><rect x="396.4" y="237" width="2.5" height="2" fill="#ff9000" opacity="0.04"/><rect x="428.8" y="333" width="2" height="2" fill="#ff9000" opacity="0.34"/><rect x="420.0" y="356" width="2.5" height="3" fill="#ffa000" opacity="0.61"/><rect x="441.3" y="290" width="3" height="4" fill="#ffa000" opacity="0.35"/><rect x="412.9" y="241" width="3" height="3" fill="#ff9000" opacity="0.08"/><rect x="426.9" y="367" width="3" height="4" fill="#ff6000" opacity="0.64"/><rect x="428.4" y="271" width="3" height="4" fill="#ff9000" opacity="0.29"/><rect x="399.9" y="372" width="3" height="2" fill="#ff6000" opacity="0.53"/><rect x="413.8" y="294" width="2" height="4" fill="#ff6000" opacity="0.28"/><rect x="396.5" y="354" width="2" height="4" fill="#ffa000" opacity="0.53"/><rect x="430.2" y="339" width="2.5" height="4" fill="#ffa000" opacity="0.57"/><rect x="406.9" y="335" width="2.5" height="3" fill="#ff9000" opacity="0.37"/><rect x="399.9" y="330" width="2" height="3" fill="#ff8000" opacity="0.32"/><rect x="425.5" y="284" width="3" height="2" fill="#ff6000" opacity="0.38"/><rect x="431.3" y="360" width="3" height="2" fill="#ff9000" opacity="0.58"/><rect x="416.8" y="354" width="2" height="3" fill="#ffa000" opacity="0.63"/><rect x="402.4" y="369" width="3" height="3" fill="#ffa000" opacity="0.58"/><rect x="438.7" y="304" width="3" height="3" fill="#ff8000" opacity="0.48"/><rect x="438.8" y="367" width="3" height="4" fill="#ff9000" opacity="0.59"/><rect x="430.8" y="360" width="2" height="3" fill="#ff9000" opacity="0.42"/><rect x="440.7" y="363" width="2" height="4" fill="#ff8000" opacity="0.48"/><rect x="449.4" y="305" width="2" height="2" fill="#ff9000" opacity="0.49"/><rect x="426.2" y="305" width="2" height="2" fill="#ff9000" opacity="0.65"/><rect x="439.1" y="323" width="3" height="2" fill="#ff6000" opacity="0.54"/><rect x="417.8" y="280" width="2" height="2" fill="#ff9000" opacity="0.41"/><rect x="430.2" y="328" width="2.5" height="3" fill="#ff9000" opacity="0.66"/><rect x="418.5" y="288" width="3" height="3" fill="#ff8000" opacity="0.27"/><rect x="421.6" y="339" width="3" height="2" fill="#ff9000" opacity="0.60"/><rect x="440.5" y="329" width="3" height="2" fill="#ffa000" opacity="0.69"/><rect x="410.0" y="299" width="3" height="3" fill="#ff8000" opacity="0.45"/><rect x="407.5" y="257" width="2" height="3" fill="#ff9000" opacity="0.19"/><rect x="432.3" y="305" width="2" height="2" fill="#ff9000" opacity="0.63"/><rect x="437.4" y="263" width="3" height="2" fill="#ff6000" opacity="0.17"/><rect x="411.2" y="236" width="3" height="2" fill="#ff6000" opacity="0.05"/><rect x="406.8" y="276" width="3" height="3" fill="#ff9000" opacity="0.21"/><rect x="436.7" y="244" width="3" height="4" fill="#ffa000" opacity="0.10"/><rect x="437.3" y="302" width="3" height="2" fill="#ffa000" opacity="0.60"/><rect x="443.6" y="307" width="3" height="2" fill="#ff6000" opacity="0.32"/><rect x="413.7" y="353" width="2" height="2" fill="#ff6000" opacity="0.56"/><rect x="421.2" y="258" width="3" height="3" fill="#ff8000" opacity="0.18"/><rect x="405.6" y="278" width="3" height="2" fill="#ff6000" opacity="0.18"/><rect x="399.1" y="372" width="3" height="2" fill="#ffa000" opacity="0.69"/><rect x="430.3" y="265" width="3" height="3" fill="#ff6000" opacity="0.29"/><rect x="446.1" y="318" width="2" height="4" fill="#ffa000" opacity="0.33"/><rect x="412.1" y="356" width="3" height="4" fill="#ff9000" opacity="0.43"/><rect x="432.7" y="342" width="3" height="4" fill="#ffa000" opacity="0.56"/><rect x="413.0" y="341" width="2.5" height="2" fill="#ffa000" opacity="0.64"/><rect x="397.0" y="368" width="2" height="4" fill="#ff8000" opacity="0.62"/><rect x="446.2" y="322" width="2" height="2" fill="#ff9000" opacity="0.64"/><rect x="435.1" y="233" width="3" height="4" fill="#ff9000" opacity="0.02"/><rect x="404.6" y="233" width="2.5" height="4" fill="#ffa000" opacity="0.03"/><rect x="431.2" y="368" width="2" height="2" fill="#ff6000" opacity="0.67"/><rect x="412.8" y="272" width="2.5" height="3" fill="#ff9000" opacity="0.19"/><rect x="397.1" y="356" width="2" height="2" fill="#ffa000" opacity="0.62"/><rect x="425.9" y="265" width="2" height="4" fill="#ff8000" opacity="0.23"/><rect x="429.2" y="368" width="2.5" height="3" fill="#ff6000" opacity="0.65"/><rect x="396.2" y="310" width="2.5" height="3" fill="#ff8000" opacity="0.34"/><rect x="449.2" y="318" width="3" height="3" fill="#ff9000" opacity="0.59"/><rect x="408.6" y="344" width="2" height="4" fill="#ffa000" opacity="0.53"/><rect x="402.6" y="278" width="2" height="3" fill="#ff8000" opacity="0.23"/><rect x="414.3" y="297" width="3" height="3" fill="#ffa000" opacity="0.37"/><rect x="422.0" y="374" width="2.5" height="2" fill="#ffa000" opacity="0.70"/><rect x="420.1" y="354" width="3" height="3" fill="#ff6000" opacity="0.56"/><rect x="442.7" y="246" width="2.5" height="4" fill="#ff6000" opacity="0.09"/><rect x="436.2" y="326" width="2.5" height="3" fill="#ffa000" opacity="0.65"/><rect x="435.7" y="324" width="2" height="4" fill="#ffa000" opacity="0.45"/><rect x="397.0" y="359" width="2" height="4" fill="#ff8000" opacity="0.46"/><rect x="445.0" y="312" width="2.5" height="3" fill="#ff6000" opacity="0.45"/><rect x="423.3" y="312" width="2" height="4" fill="#ff8000" opacity="0.69"/><rect x="449.2" y="328" width="2" height="2" fill="#ff6000" opacity="0.54"/><rect x="402.0" y="327" width="3" height="3" fill="#ffa000" opacity="0.69"/><rect x="427.1" y="359" width="3" height="3" fill="#ff9000" opacity="0.53"/><rect x="445.6" y="270" width="2.5" height="2" fill="#ff6000" opacity="0.27"/><rect x="413.9" y="292" width="3" height="2" fill="#ff9000" opacity="0.42"/><rect x="419.1" y="372" width="3" height="3" fill="#ff8000" opacity="0.59"/><rect x="447.3" y="368" width="3" height="2" fill="#ff9000" opacity="0.44"/><rect x="435.0" y="319" width="3" height="3" fill="#ff8000" opacity="0.36"/><rect x="446.0" y="338" width="3" height="3" fill="#ff6000" opacity="0.53"/><rect x="425.6" y="328" width="2" height="4" fill="#ff9000" opacity="0.68"/><rect x="428.3" y="316" width="2.5" height="4" fill="#ff8000" opacity="0.57"/><rect x="397.0" y="309" width="2" height="2" fill="#ff6000" opacity="0.44"/><rect x="449.4" y="297" width="2.5" height="4" fill="#ff8000" opacity="0.46"/><rect x="425.9" y="349" width="3" height="4" fill="#ff6000" opacity="0.50"/><rect x="407.1" y="256" width="2" height="2" fill="#ff9000" opacity="0.23"/><rect x="414.5" y="299" width="2.5" height="4" fill="#ff8000" opacity="0.30"/><rect x="429.2" y="259" width="2.5" height="4" fill="#ffa000" opacity="0.13"/><rect x="424.1" y="336" width="2.5" height="2" fill="#ffa000" opacity="0.45"/><rect x="440.0" y="233" width="2.5" height="4" fill="#ff8000" opacity="0.03"/><rect x="412.2" y="283" width="2" height="3" fill="#ff6000" opacity="0.39"/><rect x="412.0" y="306" width="3" height="2" fill="#ff9000" opacity="0.43"/><rect x="405.2" y="241" width="2" height="4" fill="#ff9000" opacity="0.06"/><rect x="413.9" y="250" width="2" height="3" fill="#ffa000" opacity="0.09"/><rect x="429.6" y="332" width="2" height="2" fill="#ffa000" opacity="0.58"/><rect x="445.3" y="311" width="2" height="4" fill="#ffa000" opacity="0.51"/><rect x="428.1" y="325" width="3" height="4" fill="#ff8000" opacity="0.45"/><rect x="426.7" y="341" width="3" height="4" fill="#ff6000" opacity="0.59"/><rect x="438.0" y="246" width="2.5" height="4" fill="#ffa000" opacity="0.07"/><rect x="399.2" y="342" width="3" height="2" fill="#ff8000" opacity="0.43"/><rect x="397.6" y="239" width="3" height="3" fill="#ff6000" opacity="0.03"/><rect x="423.6" y="290" width="3" height="3" fill="#ff6000" opacity="0.32"/><rect x="443.8" y="332" width="2" height="2" fill="#ff6000" opacity="0.54"/><rect x="397.8" y="368" width="2" height="3" fill="#ff6000" opacity="0.58"/><rect x="426.7" y="337" width="2" height="4" fill="#ff9000" opacity="0.40"/><rect x="397.7" y="371" width="2.5" height="3" fill="#ffa000" opacity="0.48"/><rect x="407.6" y="355" width="3" height="3" fill="#ff6000" opacity="0.44"/><rect x="441.0" y="370" width="2" height="4" fill="#ff6000" opacity="0.50"/><rect x="441.7" y="264" width="2.5" height="3" fill="#ff6000" opacity="0.13"/><rect x="443.2" y="350" width="3" height="3" fill="#ffa000" opacity="0.39"/><rect x="434.1" y="301" width="2" height="3" fill="#ff9000" opacity="0.28"/><rect x="402.6" y="331" width="2.5" height="4" fill="#ff6000" opacity="0.60"/><rect x="419.2" y="353" width="2.5" height="2" fill="#ffa000" opacity="0.46"/><rect x="438.9" y="243" width="2" height="4" fill="#ff6000" opacity="0.06"/><rect x="449.0" y="323" width="3" height="2" fill="#ffa000" opacity="0.32"/><rect x="416.9" y="272" width="2" height="2" fill="#ffa000" opacity="0.34"/><rect x="436.0" y="375" width="2" height="3" fill="#ff9000" opacity="0.45"/><rect x="409.7" y="313" width="3" height="2" fill="#ffa000" opacity="0.47"/><rect x="447.8" y="330" width="2" height="2" fill="#ff9000" opacity="0.60"/><rect x="397.0" y="339" width="3" height="2" fill="#ff6000" opacity="0.40"/><rect x="412.6" y="310" width="3" height="4" fill="#ff6000" opacity="0.33"/><rect x="426.8" y="282" width="2.5" height="3" fill="#ff8000" opacity="0.35"/><rect x="424.5" y="324" width="2.5" height="3" fill="#ff9000" opacity="0.46"/><rect x="415.6" y="354" width="3" height="3" fill="#ff6000" opacity="0.44"/><rect x="438.0" y="349" width="2" height="4" fill="#ff9000" opacity="0.56"/><rect x="410.7" y="300" width="2.5" height="2" fill="#ffa000" opacity="0.30"/><rect x="439.0" y="373" width="2.5" height="4" fill="#ff8000" opacity="0.37"/><rect x="436.5" y="341" width="2" height="4" fill="#ff9000" opacity="0.40"/><rect x="401.7" y="304" width="3" height="4" fill="#ff6000" opacity="0.56"/><rect x="422.1" y="329" width="3" height="2" fill="#ff6000" opacity="0.68"/><rect x="448.4" y="301" width="3" height="2" fill="#ff6000" opacity="0.48"/><rect x="403.9" y="244" width="2" height="3" fill="#ffa000" opacity="0.07"/><rect x="444.4" y="357" width="2" height="3" fill="#ff9000" opacity="0.67"/><rect x="439.5" y="328" width="3" height="4" fill="#ff9000" opacity="0.65"/><rect x="414.6" y="261" width="2" height="2" fill="#ff8000" opacity="0.23"/><rect x="403.4" y="371" width="2.5" height="2" fill="#ffa000" opacity="0.55"/><rect x="449.8" y="281" width="2.5" height="4" fill="#ff6000" opacity="0.35"/><rect x="417.5" y="375" width="3" height="2" fill="#ff9000" opacity="0.38"/><rect x="436.1" y="244" width="3" height="4" fill="#ffa000" opacity="0.10"/><rect x="444.2" y="278" width="2.5" height="2" fill="#ff9000" opacity="0.23"/><rect x="438.3" y="279" width="3" height="3" fill="#ffa000" opacity="0.24"/><rect x="409.9" y="287" width="2.5" height="4" fill="#ffa000" opacity="0.47"/><rect x="422.4" y="274" width="3" height="3" fill="#ffa000" opacity="0.23"/><rect x="440.8" y="280" width="2.5" height="2" fill="#ffa000" opacity="0.30"/><rect x="421.6" y="294" width="2" height="3" fill="#ff6000" opacity="0.32"/><rect x="405.7" y="240" width="2" height="3" fill="#ff8000" opacity="0.08"/><rect x="396.5" y="304" width="3" height="3" fill="#ff9000" opacity="0.63"/><rect x="403.5" y="247" width="2.5" height="2" fill="#ffa000" opacity="0.08"/><rect x="421.8" y="343" width="2.5" height="4" fill="#ff9000" opacity="0.35"/><rect x="398.2" y="292" width="2.5" height="3" fill="#ff6000" opacity="0.37"/><rect x="435.7" y="272" width="3" height="3" fill="#ff6000" opacity="0.18"/><rect x="433.8" y="338" width="3" height="3" fill="#ff6000" opacity="0.60"/><rect x="427.9" y="329" width="2.5" height="2" fill="#ff8000" opacity="0.66"/><rect x="416.5" y="238" width="2.5" height="3" fill="#ff9000" opacity="0.04"/><rect x="436.1" y="364" width="2" height="4" fill="#ff6000" opacity="0.53"/><rect x="447.2" y="310" width="3" height="2" fill="#ff9000" opacity="0.39"/><rect x="423.3" y="341" width="2" height="3" fill="#ffa000" opacity="0.37"/><rect x="440.4" y="262" width="2" height="4" fill="#ff9000" opacity="0.20"/><rect x="448.1" y="302" width="2.5" height="2" fill="#ffa000" opacity="0.46"/><rect x="400.1" y="263" width="3" height="4" fill="#ff6000" opacity="0.28"/><rect x="398.4" y="343" width="3" height="4" fill="#ff8000" opacity="0.57"/><rect x="442.3" y="274" width="2" height="4" fill="#ffa000" opacity="0.24"/><rect x="413.3" y="265" width="3" height="3" fill="#ff6000" opacity="0.27"/><rect x="413.3" y="277" width="2" height="4" fill="#ff8000" opacity="0.24"/><rect x="439.7" y="245" width="3" height="4" fill="#ffa000" opacity="0.08"/><rect x="449.8" y="342" width="2.5" height="3" fill="#ffa000" opacity="0.39"/><rect x="428.1" y="253" width="2.5" height="3" fill="#ff8000" opacity="0.14"/><rect x="439.0" y="366" width="3" height="4" fill="#ff6000" opacity="0.69"/><rect x="403.9" y="289" width="2" height="2" fill="#ff6000" opacity="0.40"/><rect x="441.3" y="325" width="2.5" height="3" fill="#ff6000" opacity="0.37"/><rect x="399.7" y="324" width="3" height="4" fill="#ff6000" opacity="0.59"/><rect x="448.3" y="236" width="2.5" height="4" fill="#ff6000" opacity="0.03"/><rect x="431.5" y="372" width="2.5" height="3" fill="#ff8000" opacity="0.65"/><rect x="432.5" y="361" width="3" height="4" fill="#ff8000" opacity="0.49"/><rect x="426.2" y="292" width="3" height="2" fill="#ffa000" opacity="0.50"/><rect x="444.8" y="297" width="2" height="2" fill="#ff9000" opacity="0.54"/><rect x="418.2" y="340" width="2.5" height="4" fill="#ff9000" opacity="0.59"/><rect x="447.2" y="285" width="3" height="4" fill="#ff8000" opacity="0.43"/><rect x="428.3" y="265" width="2.5" height="3" fill="#ff9000" opacity="0.29"/><rect x="415.3" y="313" width="2" height="2" fill="#ff9000" opacity="0.44"/><rect x="425.4" y="235" width="2.5" height="3" fill="#ff9000" opacity="0.02"/><rect x="408.0" y="244" width="2.5" height="2" fill="#ff9000" opacity="0.11"/><rect x="400.1" y="314" width="2" height="3" fill="#ff9000" opacity="0.63"/><rect x="415.7" y="335" width="2" height="3" fill="#ffa000" opacity="0.38"/><rect x="412.9" y="364" width="2.5" height="3" fill="#ff8000" opacity="0.61"/><rect x="441.1" y="234" width="3" height="2" fill="#ff8000" opacity="0.02"/><rect x="415.7" y="296" width="3" height="2" fill="#ff6000" opacity="0.53"/><rect x="421.5" y="269" width="2.5" height="4" fill="#ff9000" opacity="0.20"/><rect x="442.0" y="369" width="3" height="4" fill="#ff6000" opacity="0.62"/><rect x="430.1" y="268" width="2.5" height="4" fill="#ffa000" opacity="0.25"/><rect x="436.7" y="319" width="2.5" height="3" fill="#ffa000" opacity="0.31"/><rect x="400.4" y="339" width="3" height="3" fill="#ff6000" opacity="0.42"/><rect x="442.9" y="370" width="3" height="2" fill="#ff6000" opacity="0.37"/><rect x="433.2" y="335" width="3" height="2" fill="#ffa000" opacity="0.32"/><rect x="440.3" y="367" width="2" height="4" fill="#ff8000" opacity="0.46"/><rect x="424.7" y="347" width="2" height="2" fill="#ff8000" opacity="0.44"/><rect x="431.0" y="237" width="2" height="2" fill="#ff9000" opacity="0.04"/><rect x="435.2" y="369" width="2.5" height="4" fill="#ffa000" opacity="0.62"/><rect x="420.8" y="318" width="2.5" height="3" fill="#ff9000" opacity="0.37"/><rect x="426.7" y="373" width="2" height="3" fill="#ffa000" opacity="0.52"/><rect x="415.9" y="277" width="2.5" height="3" fill="#ff8000" opacity="0.21"/><rect x="396.8" y="258" width="3" height="4" fill="#ff6000" opacity="0.14"/><rect x="416.4" y="264" width="2" height="2" fill="#ff9000" opacity="0.25"/><rect x="404.1" y="369" width="2" height="3" fill="#ff6000" opacity="0.63"/><rect x="433.4" y="359" width="2" height="4" fill="#ff6000" opacity="0.50"/><rect x="442.5" y="334" width="3" height="2" fill="#ffa000" opacity="0.69"/><rect x="411.3" y="266" width="2" height="4" fill="#ff9000" opacity="0.26"/><rect x="409.5" y="360" width="2.5" height="2" fill="#ff6000" opacity="0.46"/><rect x="433.1" y="300" width="2" height="4" fill="#ff6000" opacity="0.51"/><rect x="434.4" y="275" width="2.5" height="2" fill="#ff9000" opacity="0.21"/><rect x="442.9" y="302" width="3" height="2" fill="#ff9000" opacity="0.61"/><rect x="411.0" y="283" width="3" height="4" fill="#ff6000" opacity="0.37"/><rect x="402.8" y="333" width="2" height="2" fill="#ff6000" opacity="0.63"/><rect x="437.2" y="285" width="2" height="4" fill="#ff6000" opacity="0.34"/><rect x="445.3" y="331" width="3" height="4" fill="#ff6000" opacity="0.66"/><rect x="409.7" y="345" width="2.5" height="3" fill="#ffa000" opacity="0.54"/><rect x="409.8" y="363" width="3" height="2" fill="#ff6000" opacity="0.42"/><rect x="442.8" y="368" width="2.5" height="3" fill="#ff9000" opacity="0.48"/><rect x="446.2" y="301" width="2" height="4" fill="#ff9000" opacity="0.34"/><rect x="421.9" y="327" width="2.5" height="2" fill="#ffa000" opacity="0.38"/><rect x="447.9" y="368" width="2" height="2" fill="#ffa000" opacity="0.49"/><rect x="436.3" y="343" width="3" height="2" fill="#ff9000" opacity="0.65"/><rect x="413.2" y="374" width="3" height="3" fill="#ffa000" opacity="0.33"/><rect x="418.8" y="334" width="3" height="4" fill="#ffa000" opacity="0.43"/><rect x="420.2" y="306" width="2.5" height="3" fill="#ff9000" opacity="0.48"/><rect x="412.3" y="319" width="2.5" height="3" fill="#ffa000" opacity="0.49"/><rect x="449.7" y="369" width="3" height="2" fill="#ff8000" opacity="0.64"/><rect x="408.8" y="370" width="2.5" height="3" fill="#ff6000" opacity="0.35"/><rect x="438.5" y="328" width="2.5" height="3" fill="#ffa000" opacity="0.36"/><rect x="401.5" y="337" width="2" height="2" fill="#ffa000" opacity="0.61"/><rect x="438.4" y="350" width="3" height="2" fill="#ff9000" opacity="0.39"/><rect x="436.6" y="369" width="2.5" height="2" fill="#ff8000" opacity="0.35"/><rect x="447.9" y="246" width="3" height="3" fill="#ff6000" opacity="0.12"/><rect x="445.7" y="269" width="2.5" height="2" fill="#ff6000" opacity="0.18"/><rect x="411.9" y="279" width="2.5" height="4" fill="#ff6000" opacity="0.33"/><rect x="422.7" y="305" width="2.5" height="4" fill="#ff8000" opacity="0.52"/><rect x="436.2" y="342" width="2.5" height="2" fill="#ff8000" opacity="0.41"/><rect x="443.4" y="278" width="3" height="4" fill="#ff8000" opacity="0.38"/><rect x="416.6" y="360" width="2" height="3" fill="#ff8000" opacity="0.54"/><rect x="396.9" y="281" width="2.5" height="2" fill="#ffa000" opacity="0.35"/><rect x="424.6" y="338" width="2" height="3" fill="#ff8000" opacity="0.66"/><rect x="434.4" y="369" width="2.5" height="3" fill="#ff9000" opacity="0.66"/><rect x="425.4" y="285" width="2" height="2" fill="#ff8000" opacity="0.32"/><rect x="405.3" y="336" width="2" height="2" fill="#ffa000" opacity="0.41"/><rect x="411.2" y="358" width="2.5" height="3" fill="#ff8000" opacity="0.56"/><rect x="446.9" y="340" width="2.5" height="3" fill="#ff8000" opacity="0.48"/><rect x="425.4" y="253" width="2" height="3" fill="#ffa000" opacity="0.13"/><rect x="444.1" y="370" width="3" height="4" fill="#ffa000" opacity="0.37"/><rect x="441.0" y="322" width="2.5" height="2" fill="#ff9000" opacity="0.34"/><rect x="415.8" y="279" width="2.5" height="2" fill="#ff8000" opacity="0.28"/><rect x="444.5" y="358" width="2.5" height="2" fill="#ff8000" opacity="0.32"/><rect x="410.8" y="326" width="3" height="4" fill="#ffa000" opacity="0.35"/><rect x="446.2" y="232" width="2" height="3" fill="#ff8000" opacity="0.01"/><rect x="399.8" y="321" width="2.5" height="4" fill="#ff6000" opacity="0.47"/><rect x="398.2" y="373" width="3" height="2" fill="#ff6000" opacity="0.58"/><rect x="434.9" y="359" width="2.5" height="2" fill="#ff9000" opacity="0.35"/><rect x="401.4" y="354" width="2" height="3" fill="#ff6000" opacity="0.38"/><rect x="447.7" y="357" width="2" height="4" fill="#ffa000" opacity="0.36"/><path d="M396.8 302.6 C399 318 406 330 419 336 C428 339 440 340 449 339.7" fill="none" stroke="#ff2800" stroke-width="2.85" stroke-dasharray="6 1 4 1" opacity="1.00"/><path d="M400.5 324.9 C404 333 412 342 422.8 345.3 C432 348 442 350 449 350.8" fill="none" stroke="#ff2800" stroke-width="2.85" stroke-dasharray="6 1 4 1" opacity="1.00"/><path d="M398.6 337.9 C402 345 410 352 418 357 C424 361 430 364 436 366" fill="none" stroke="#ff2800" stroke-width="2.47" stroke-dasharray="6 1 4 1" opacity="0.95"/><path d="M448.7 343.4 C455 343 463 341.6 471 337.9" fill="none" stroke="#ff2800" stroke-width="2.47" stroke-dasharray="6 1 4 1" opacity="0.95"/><path d="M397 292 C399 300 402 308 406 314" fill="none" stroke="#ff2800" stroke-width="1.90" stroke-dasharray="6 1 4 1" opacity="0.70"/><path d="M410 318 C418 326 428 330 440 331 L449 331" fill="none" stroke="#ff2800" stroke-width="1.71" stroke-dasharray="6 1 4 1" opacity="0.65"/><path d="M398 352 C401 360 404 366 407 374" fill="none" stroke="#ff2800" stroke-width="2.09" stroke-dasharray="6 1 4 1" opacity="0.80"/><path d="M412 364 C420 370 432 373 446 373" fill="none" stroke="#ff2800" stroke-width="1.90" stroke-dasharray="6 1 4 1" opacity="0.70"/><rect x="364" y="332" width="19" height="3.5" fill="#e8f000" opacity="0.9"/><rect x="365" y="338" width="18" height="3.5" fill="#d8f000" opacity="0.85"/><rect x="351" y="335" width="3" height="4" fill="#c0f000" opacity="0.8"/><rect x="337.5" y="203" width="1.2" height="172" fill="#40f000" opacity="0.45"/><rect x="369.5" y="265" width="1.2" height="110" fill="#40f000" opacity="0.45"/><rect x="241" y="327" width="2" height="2.5" fill="#ffa000" opacity="0.9"/><rect x="243" y="335" width="2" height="2.5" fill="#e8f000" opacity="0.9"/><rect x="247" y="340" width="2" height="2.5" fill="#e8f000" opacity="0.9"/><rect x="250" y="347" width="2" height="2.5" fill="#ffa000" opacity="0.9"/><rect x="252" y="356" width="2" height="2.5" fill="#e8f000" opacity="0.9"/><rect x="254" y="364" width="2" height="2.5" fill="#e8f000" opacity="0.9"/><rect x="256" y="370" width="2" height="2.5" fill="#ffa000" opacity="0.9"/><rect x="262" y="361" width="2" height="2.5" fill="#e8f000" opacity="0.9"/><rect x="266" y="365" width="2" height="2.5" fill="#e8f000" opacity="0.9"/><rect x="272" y="366" width="2" height="2.5" fill="#ffa000" opacity="0.9"/><rect x="276" y="367" width="2" height="2.5" fill="#e8f000" opacity="0.9"/><rect x="280" y="366" width="2" height="2.5" fill="#e8f000" opacity="0.9"/><rect x="284" y="367" width="2" height="2.5" fill="#ffa000" opacity="0.9"/><rect x="290" y="364" width="2" height="2.5" fill="#e8f000" opacity="0.9"/><rect x="296" y="365" width="2" height="2.5" fill="#e8f000" opacity="0.9"/><rect x="300" y="362" width="2" height="2.5" fill="#ffa000" opacity="0.9"/><rect x="304" y="357" width="2" height="2.5" fill="#e8f000" opacity="0.9"/><rect x="308" y="353" width="2" height="2.5" fill="#e8f000" opacity="0.9"/><rect x="318" y="348" width="2" height="2.5" fill="#ffa000" opacity="0.9"/><rect x="322" y="342" width="2" height="2.5" fill="#e8f000" opacity="0.9"/><rect x="326" y="334" width="2" height="2.5" fill="#e8f000" opacity="0.9"/><rect x="330" y="326" width="2" height="2.5" fill="#ffa000" opacity="0.9"/><rect x="334" y="318" width="2" height="2.5" fill="#e8f000" opacity="0.9"/><rect x="337" y="308" width="2" height="2.5" fill="#e8f000" opacity="0.9"/><rect x="279" y="355" width="2" height="2.5" fill="#ffa000" opacity="0.9"/><rect x="282" y="356" width="2" height="2.5" fill="#e8f000" opacity="0.9"/><rect x="286" y="355" width="2" height="2.5" fill="#e8f000" opacity="0.9"/><rect x="305" y="362" width="2" height="2.5" fill="#ffa000" opacity="0.9"/><rect x="318" y="370" width="2" height="2.5" fill="#e8f000" opacity="0.9"/><rect x="323" y="374" width="2" height="2.5" fill="#e8f000" opacity="0.9"/><rect x="326" y="365" width="2" height="2.5" fill="#ffa000" opacity="0.9"/><rect x="329" y="360" width="2" height="2.5" fill="#e8f000" opacity="0.9"/><rect x="333" y="352" width="2" height="2.5" fill="#e8f000" opacity="0.9"/><rect x="312.5" y="336" width="3" height="4" fill="#ff3000"/><rect x="308" y="343" width="6" height="5" fill="#ffe000" filter="url(#b1)"/><rect x="254.4" y="351" width="1.5" height="3" fill="#60f000" opacity="0.37"/><rect x="379.4" y="352" width="1.5" height="3" fill="#60f000" opacity="0.61"/><rect x="303.1" y="348" width="1" height="3" fill="#e0f000" opacity="0.34"/><rect x="586.6" y="355" width="1.5" height="3" fill="#30f000" opacity="0.32"/><rect x="295.6" y="372" width="1.5" height="2" fill="#e0f000" opacity="0.35"/><rect x="311.9" y="353" width="1" height="2" fill="#60f000" opacity="0.68"/><rect x="377.7" y="352" width="1" height="5" fill="#30f000" opacity="0.55"/><rect x="250.5" y="350" width="1.5" height="5" fill="#e0f000" opacity="0.53"/><rect x="391.6" y="360" width="1.5" height="2" fill="#30f000" opacity="0.47"/><rect x="588.1" y="354" width="2" height="5" fill="#e0f000" opacity="0.32"/><rect x="224.4" y="350" width="1.5" height="5" fill="#e0f000" opacity="0.42"/><rect x="680.6" y="355" width="1.5" height="3" fill="#a0f000" opacity="0.48"/><rect x="563.7" y="360" width="1" height="2" fill="#a0f000" opacity="0.41"/><rect x="486.3" y="350" width="2" height="5" fill="#a0f000" opacity="0.60"/><rect x="660.4" y="372" width="2" height="5" fill="#a0f000" opacity="0.37"/><rect x="503.9" y="354" width="1" height="2" fill="#a0f000" opacity="0.41"/><rect x="482.1" y="358" width="2" height="3" fill="#30f000" opacity="0.35"/><rect x="543.3" y="365" width="2" height="5" fill="#60f000" opacity="0.63"/><rect x="587.2" y="368" width="2" height="2" fill="#a0f000" opacity="0.68"/><rect x="678.1" y="358" width="1" height="3" fill="#a0f000" opacity="0.52"/><rect x="260.5" y="356" width="1" height="2" fill="#e0f000" opacity="0.33"/><rect x="593.9" y="353" width="1.5" height="5" fill="#60f000" opacity="0.47"/><rect x="302.1" y="349" width="1.5" height="5" fill="#60f000" opacity="0.37"/><rect x="659.3" y="367" width="1" height="3" fill="#e0f000" opacity="0.56"/><rect x="394.3" y="363" width="1" height="5" fill="#a0f000" opacity="0.47"/><rect x="391.3" y="370" width="2" height="5" fill="#30f000" opacity="0.47"/><rect x="611.1" y="368" width="1" height="3" fill="#30f000" opacity="0.53"/><rect x="387.0" y="353" width="1.5" height="5" fill="#a0f000" opacity="0.65"/><rect x="338.0" y="355" width="1.5" height="5" fill="#60f000" opacity="0.44"/><rect x="657.7" y="354" width="1" height="5" fill="#e0f000" opacity="0.67"/><rect x="565.0" y="346" width="1.5" height="5" fill="#30f000" opacity="0.69"/><rect x="557.5" y="359" width="1.5" height="3" fill="#e0f000" opacity="0.51"/><rect x="499.2" y="348" width="1" height="5" fill="#30f000" opacity="0.41"/><rect x="613.7" y="349" width="1" height="3" fill="#a0f000" opacity="0.64"/><rect x="656.8" y="373" width="1" height="3" fill="#e0f000" opacity="0.44"/><rect x="505.7" y="349" width="1.5" height="3" fill="#a0f000" opacity="0.51"/><rect x="631.3" y="361" width="1.5" height="2" fill="#60f000" opacity="0.45"/><rect x="234.7" y="369" width="1" height="2" fill="#30f000" opacity="0.31"/><rect x="600.7" y="353" width="1.5" height="3" fill="#e0f000" opacity="0.38"/><rect x="615.0" y="366" width="1" height="3" fill="#e0f000" opacity="0.32"/><rect x="465.7" y="365" width="1" height="3" fill="#60f000" opacity="0.40"/><rect x="384.5" y="371" width="1" height="2" fill="#a0f000" opacity="0.61"/><rect x="263.1" y="350" width="1.5" height="3" fill="#e0f000" opacity="0.37"/><rect x="606.3" y="347" width="1.5" height="3" fill="#a0f000" opacity="0.59"/><rect x="493.8" y="353" width="2" height="3" fill="#60f000" opacity="0.38"/><rect x="551.8" y="346" width="1.5" height="2" fill="#e0f000" opacity="0.31"/><rect x="394.8" y="352" width="2" height="5" fill="#a0f000" opacity="0.53"/><rect x="630.7" y="354" width="1.5" height="5" fill="#a0f000" opacity="0.59"/><rect x="309.8" y="363" width="1" height="5" fill="#60f000" opacity="0.49"/><rect x="687.7" y="366" width="1" height="5" fill="#a0f000" opacity="0.56"/><rect x="554.1" y="360" width="1" height="3" fill="#60f000" opacity="0.64"/><rect x="683.3" y="353" width="1.5" height="5" fill="#60f000" opacity="0.46"/><rect x="230.7" y="353" width="1.5" height="3" fill="#60f000" opacity="0.36"/><rect x="280.9" y="349" width="2" height="3" fill="#60f000" opacity="0.68"/><rect x="471.7" y="362" width="1.5" height="2" fill="#60f000" opacity="0.43"/><rect x="380.2" y="347" width="1" height="3" fill="#e0f000" opacity="0.68"/><rect x="564.8" y="348" width="1.5" height="5" fill="#60f000" opacity="0.60"/><rect x="472.5" y="368" width="1.5" height="3" fill="#a0f000" opacity="0.64"/><rect x="627.7" y="367" width="1" height="2" fill="#a0f000" opacity="0.37"/><rect x="590.9" y="345" width="2" height="2" fill="#30f000" opacity="0.69"/><rect x="655.1" y="354" width="1" height="5" fill="#30f000" opacity="0.66"/><rect x="545.1" y="367" width="1.5" height="2" fill="#a0f000" opacity="0.40"/><rect x="637.1" y="362" width="2" height="5" fill="#60f000" opacity="0.63"/><rect x="550.0" y="362" width="2" height="3" fill="#30f000" opacity="0.41"/><rect x="651.3" y="372" width="2" height="2" fill="#30f000" opacity="0.60"/><rect x="571.4" y="347" width="1.5" height="2" fill="#30f000" opacity="0.52"/><rect x="522.1" y="371" width="2" height="5" fill="#30f000" opacity="0.51"/><rect x="316.1" y="364" width="2" height="3" fill="#60f000" opacity="0.59"/><rect x="541.4" y="345" width="2" height="2" fill="#e0f000" opacity="0.39"/><rect x="314.6" y="359" width="1" height="5" fill="#a0f000" opacity="0.52"/><rect x="621.7" y="357" width="2" height="3" fill="#a0f000" opacity="0.41"/><rect x="380.0" y="350" width="2" height="2" fill="#30f000" opacity="0.36"/><rect x="609.8" y="359" width="1" height="2" fill="#a0f000" opacity="0.45"/><rect x="378.2" y="367" width="1.5" height="3" fill="#e0f000" opacity="0.37"/><rect x="385.4" y="367" width="1" height="2" fill="#a0f000" opacity="0.47"/><rect x="354.1" y="354" width="1" height="3" fill="#30f000" opacity="0.36"/><rect x="391.3" y="365" width="1.5" height="2" fill="#30f000" opacity="0.52"/><rect x="464.9" y="354" width="2" height="5" fill="#30f000" opacity="0.47"/><rect x="349.3" y="374" width="2" height="3" fill="#a0f000" opacity="0.68"/><rect x="266.6" y="366" width="2" height="5" fill="#a0f000" opacity="0.50"/><path d="M250 352 C258 362 268 368 285 367 C300 366 310 362 318 350 C326 338 332 326 337 306" fill="none" stroke="#d8f000" stroke-width="2.2" stroke-dasharray="3 2 2 1.5" opacity="0.85"/><path d="M323 375 C328 365 333 352 336 340" fill="none" stroke="#f0e000" stroke-width="2.5" stroke-dasharray="4 2" opacity="0.85"/><rect x="313.3" y="328" width="1.8" height="22" fill="#ff7000" opacity="0.85"/><path d="M376 290 L366 375 M376 290 L386 375 M370 300 L372 375" fill="none" stroke="#40f000" stroke-width="1.2" opacity="0.5"/><rect x="512" y="331" width="5" height="5" fill="#ffc000"/><rect x="530" y="288" width="14" height="70" fill="#10ee30" opacity="0.45" filter="url(#b3)"/><path d="M531 300V372" stroke="#c0f000" stroke-width="1" stroke-dasharray="3 4"/><rect x="533" y="341" width="18" height="5" fill="#ffe000" opacity="0.9" filter="url(#b1)"/><rect x="676" y="353" width="4" height="5" fill="#d0ff00"/><rect x="674" y="330" width="8" height="45" fill="#20f000" opacity="0.4" filter="url(#b1)"/><rect x="455" y="320" width="4" height="4" fill="#ff9000"/><rect x="463" y="307" width="3" height="4" fill="#ffb000"/><rect x="470" y="295" width="3" height="3" fill="#ffb000"/><rect x="475" y="292" width="3" height="3" fill="#ffc000"/><rect x="466" y="337" width="3" height="3" fill="#ffb000"/></g></svg><svg class="a" style="left:0;top:0" width="1345" height="916"><rect x="219.5" y="197.5" width="469" height="180" fill="none" stroke="#000" stroke-width="1"/><rect x="219.5" y="440.5" width="469" height="181" fill="none" stroke="#000" stroke-width="1"/><defs><linearGradient id="cb" x1="0" y1="0" x2="0" y2="1"><stop offset="0" stop-color="#ff1000"/><stop offset="0.13" stop-color="#ff5000"/><stop offset="0.245" stop-color="#ffa000"/><stop offset="0.356" stop-color="#ffff00"/><stop offset="0.435" stop-color="#a0ff00"/><stop offset="0.503" stop-color="#00e600"/><stop offset="0.559" stop-color="#00e840"/><stop offset="0.661" stop-color="#00f0a0"/><stop offset="0.751" stop-color="#00ffff"/><stop offset="0.83" stop-color="#0080ff"/><stop offset="0.887" stop-color="#0000ff"/><stop offset="1" stop-color="#000080"/></linearGradient></defs><rect x="704" y="198" width="16" height="179" fill="url(#cb)"/><path d="M720.5 198V378" stroke="#000" shape-rendering="crispEdges"/><path d="M720 377.5H732M720 364.5H726M720 350.5H732M720 337.5H726M720 323.5H732M720 310.5H726M720 297.5H732M720 283.5H726M720 270.5H732M720 257.5H726M720 243.5H732M720 230.5H726M720 216.5H732M208 374.5H219M214 344.5H219M214 326.5H219M214 313.5H219M214 303.5H219M214 295.5H219M214 288.5H219M214 283.5H219M214 277.5H219M208 273.5H219M214 242.5H219M214 224.5H219M214 212.5H219M214 202.5H219M220.5 377V383M238.5 377V388M256.5 377V383M274.5 377V383M292.5 377V383M310.5 377V383M328.5 377V383M346.5 377V383M364.5 377V383M382.5 377V383M400.5 377V383M418.5 377V383M436.5 377V383M454.5 377V388M472.5 377V383M490.5 377V383M508.5 377V383M526.5 377V383M544.5 377V383M562.5 377V383M580.5 377V383M598.5 377V383M616.5 377V383M634.5 377V383M652.5 377V383M670.5 377V388M688.5 377V383M220.5 621V627M238.5 621V632M256.5 621V627M274.5 621V627M292.5 621V627M310.5 621V627M328.5 621V627M346.5 621V627M364.5 621V627M382.5 621V627M400.5 621V627M418.5 621V627M436.5 621V627M454.5 621V632M472.5 621V627M490.5 621V627M508.5 621V627M526.5 621V627M544.5 621V627M562.5 621V627M580.5 621V627M598.5 621V627M616.5 621V627M634.5 621V627M652.5 621V627M670.5 621V632M688.5 621V627M214 620.5H219M208 599.5H219M214 579.5H219M208 561.5H219M214 545.5H219M208 529.5H219M214 514.5H219M208 500.5H219M214 487.5H219M208 475.5H219M214 463.5H219M208 451.5H219M214 440.5H219" stroke="#000" stroke-width="1" fill="none" shape-rendering="crispEdges"/></svg><div class="t" style="left:317.40px;top:173.66px;font-size:16px;color:#1a1a1a;transform:scaleX(1.0199);transform-origin:0 0;">RBSP-A/EMFISIS  HFR Spectra Data</div><div class="t" style="left:174.80px;top:269.16px;font-size:16px;color:#1a1a1a;transform:scaleX(0.9685);transform-origin:0 0;">10</div><div class="t" style="left:192.80px;top:261.50px;font-size:15px;color:#1a1a1a;transform:scaleX(1.1411);transform-origin:0 0;">5</div><div class="t" style="left:174.40px;top:370.46px;font-size:16px;color:#1a1a1a;transform:scaleX(0.9854);transform-origin:0 0;">10</div><div class="t" style="left:193.60px;top:363.10px;font-size:15px;color:#1a1a1a;transform:scaleX(1.1772);transform-origin:0 0;">4</div><div class="t" style="left:737.20px;top:213.16px;font-size:16px;color:#1a1a1a;transform:scaleX(1.0191);transform-origin:0 0;">10</div><div class="t" style="left:757.00px;top:206.30px;font-size:15px;color:#1a1a1a;transform:scaleX(1.1303);transform-origin:0 0;">-10</div><div class="t" style="left:737.20px;top:239.91px;font-size:16px;color:#1a1a1a;transform:scaleX(1.0191);transform-origin:0 0;">10</div><div class="t" style="left:757.00px;top:233.05px;font-size:15px;color:#1a1a1a;transform:scaleX(1.1303);transform-origin:0 0;">-12</div><div class="t" style="left:737.20px;top:266.66px;font-size:16px;color:#1a1a1a;transform:scaleX(1.0191);transform-origin:0 0;">10</div><div class="t" style="left:757.00px;top:259.80px;font-size:15px;color:#1a1a1a;transform:scaleX(1.1303);transform-origin:0 0;">-14</div><div class="t" style="left:737.20px;top:293.41px;font-size:16px;color:#1a1a1a;transform:scaleX(1.0191);transform-origin:0 0;">10</div><div class="t" style="left:757.00px;top:286.55px;font-size:15px;color:#1a1a1a;transform:scaleX(1.1303);transform-origin:0 0;">-16</div><div class="t" style="left:737.20px;top:320.16px;font-size:16px;color:#1a1a1a;transform:scaleX(1.0191);transform-origin:0 0;">10</div><div class="t" style="left:757.00px;top:313.30px;font-size:15px;color:#1a1a1a;transform:scaleX(1.1303);transform-origin:0 0;">-18</div><div class="t" style="left:737.20px;top:346.91px;font-size:16px;color:#1a1a1a;transform:scaleX(1.0191);transform-origin:0 0;">10</div><div class="t" style="left:757.00px;top:340.05px;font-size:15px;color:#1a1a1a;transform:scaleX(1.1303);transform-origin:0 0;">-20</div><div class="t" style="left:737.20px;top:373.66px;font-size:16px;color:#1a1a1a;transform:scaleX(1.0191);transform-origin:0 0;">10</div><div class="t" style="left:757.00px;top:366.80px;font-size:15px;color:#1a1a1a;transform:scaleX(1.1303);transform-origin:0 0;">-22</div><div class="t" style="left:216.50px;top:394.96px;font-size:16px;color:#1a1a1a;transform:scaleX(1.0853);transform-origin:0 0;">00:00</div><div class="t" style="left:216.30px;top:411.46px;font-size:16px;color:#1a1a1a;transform:scaleX(1.1009);transform-origin:0 0;">2012-12-02</div><div class="t" style="left:648.60px;top:394.96px;font-size:16px;color:#1a1a1a;transform:scaleX(1.0828);transform-origin:0 0;">00:00</div><div class="t" style="left:648.60px;top:411.06px;font-size:16px;color:#1a1a1a;transform:scaleX(1.1070);transform-origin:0 0;">2012-12-03</div><div class="t" style="left:155.3px;top:287px;font-size:16px;color:#1a1a1a;transform:translate(-50%,-50%) rotate(-90deg) scaleX(1.025)">Hz</div><div class="t" style="left:799.3px;top:288px;font-size:16px;color:#1a1a1a;transform:translate(-50%,-50%) rotate(-90deg) scaleX(1.211)">V^2/m^2/Hz</div><div class="t" style="left:161.2px;top:531.6px;font-size:16px;color:#1a1a1a;transform:translate(-50%,-50%) rotate(-90deg) scaleX(1.070)">e Tperp/Tpar</div><div class="t" style="left:295.00px;top:400.36px;font-size:16px;color:#1a1a1a;transform:scaleX(1.0300);transform-origin:0 0;">RBSP-A/ECT</div><div class="t" style="left:576.23px;top:400.36px;font-size:16px;color:#1a1a1a;transform:scaleX(1.0300);transform-origin:0 0;">Tpar</div><div class="t" style="left:178.18px;top:443.86px;font-size:16px;color:#1a1a1a;transform:scaleX(1.0800);transform-origin:0 0;">2.2</div><div class="t" style="left:178.18px;top:467.86px;font-size:16px;color:#1a1a1a;transform:scaleX(1.0800);transform-origin:0 0;">2.0</div><div class="t" style="left:178.18px;top:492.86px;font-size:16px;color:#1a1a1a;transform:scaleX(1.0800);transform-origin:0 0;">1.8</div><div class="t" style="left:178.18px;top:521.96px;font-size:16px;color:#1a1a1a;transform:scaleX(1.0800);transform-origin:0 0;">1.6</div><div class="t" style="left:178.18px;top:554.56px;font-size:16px;color:#1a1a1a;transform:scaleX(1.0800);transform-origin:0 0;">1.4</div><div class="t" style="left:178.18px;top:591.86px;font-size:16px;color:#1a1a1a;transform:scaleX(1.0800);transform-origin:0 0;">1.2</div><div class="t" style="left:216.41px;top:639.26px;font-size:16px;color:#1a1a1a;transform:scaleX(1.0900);transform-origin:0 0;">00:00</div><div class="t" style="left:432.81px;top:639.26px;font-size:16px;color:#1a1a1a;transform:scaleX(1.0900);transform-origin:0 0;">12:00</div><div class="t" style="left:648.61px;top:639.26px;font-size:16px;color:#1a1a1a;transform:scaleX(1.0900);transform-origin:0 0;">00:00</div><div class="t" style="left:216.41px;top:658.96px;font-size:16px;color:#1a1a1a;transform:scaleX(1.0900);transform-origin:0 0;">4.225</div><div class="t" style="left:432.81px;top:658.96px;font-size:16px;color:#1a1a1a;transform:scaleX(1.0900);transform-origin:0 0;">5.756</div><div class="t" style="left:648.61px;top:658.96px;font-size:16px;color:#1a1a1a;transform:scaleX(1.0900);transform-origin:0 0;">3.179</div><div class="t" style="left:200.98px;top:679.16px;font-size:16px;color:#1a1a1a;transform:scaleX(1.0900);transform-origin:0 0;">-10.580</div><div class="t" style="left:427.06px;top:679.16px;font-size:16px;color:#1a1a1a;transform:scaleX(1.0900);transform-origin:0 0;">-1.544</div><div class="t" style="left:633.18px;top:679.16px;font-size:16px;color:#1a1a1a;transform:scaleX(1.0900);transform-origin:0 0;">-16.190</div><div class="t" style="left:216.41px;top:699.46px;font-size:16px;color:#1a1a1a;transform:scaleX(1.0900);transform-origin:0 0;">2.247</div><div class="t" style="left:432.81px;top:699.46px;font-size:16px;color:#1a1a1a;transform:scaleX(1.0900);transform-origin:0 0;">5.398</div><div class="t" style="left:648.61px;top:699.46px;font-size:16px;color:#1a1a1a;transform:scaleX(1.0900);transform-origin:0 0;">8.125</div><div class="t" style="left:216.41px;top:719.06px;font-size:16px;color:#1a1a1a;transform:scaleX(1.0900);transform-origin:0 0;">4.373</div><div class="t" style="left:432.81px;top:719.06px;font-size:16px;color:#1a1a1a;transform:scaleX(1.0900);transform-origin:0 0;">5.760</div><div class="t" style="left:648.61px;top:719.06px;font-size:16px;color:#1a1a1a;transform:scaleX(1.0900);transform-origin:0 0;">3.447</div><div class="t" style="left:154.98px;top:658.96px;font-size:16px;color:#1a1a1a;">R</div><div class="t" style="left:167.19px;top:668.69px;font-size:11px;color:#1a1a1a;">E</div><div class="t" style="left:138.30px;top:679.16px;font-size:16px;color:#1a1a1a;transform:scaleX(1.0056);transform-origin:0 0;">MLat</div><div class="t" style="left:144.50px;top:699.46px;font-size:16px;color:#1a1a1a;transform:scaleX(0.9610);transform-origin:0 0;">MLT</div><div class="t" style="left:165.22px;top:719.06px;font-size:16px;color:#1a1a1a;">L</div><div class="t" style="left:252.80px;top:743.56px;font-size:16px;color:#1a1a1a;transform:scaleX(1.1225);transform-origin:0 0;">2012-12-01 (336) 23:00 to 2012-12-03 (338) 01:00</div><svg class="a" style="left:0;top:0" width="1345" height="916"><path d="M220.5 502.5V525.5M221.5 495.6V519.6M222.5 493.9V517.7M223.5 485.0V520.8M224.5 484.7V512.6M225.5 482.2V505.7M226.5 458.7V505.8M227.5 466.3V492.9M228.5 470.4V493.3M229.5 466.2V488.1M230.5 462.7V483.1M231.5 469.0V487.8M232.5 469.3V483.9M233.5 467.7V485.2M234.5 468.1V490.6M235.5 462.2V498.9M236.5 469.4V508.3M237.5 477.6V502.2M238.5 483.0V508.0M239.5 488.9V504.0M240.5 492.9V509.2M241.5 498.7V510.9M242.5 493.8V522.5M243.5 500.5V527.1M244.5 504.7V521.5M245.5 515.6V529.5M246.5 518.7V535.0M247.5 522.5V534.4M248.5 519.7V534.9M249.5 523.8V540.0M250.5 528.3V540.3M251.5 529.5V540.8M252.5 535.8V547.3M253.5 536.4V546.2M254.5 540.2V547.4M255.5 540.9V555.4M256.5 546.9V554.8M257.5 546.4V561.3M258.5 550.6V561.1M259.5 555.6V563.6M260.5 553.0V563.4M261.5 555.8V561.9M262.5 551.4V563.0M263.5 553.5V563.1M264.5 553.5V562.2M265.5 554.6V564.8M266.5 555.3V565.6M267.5 559.8V567.5M268.5 561.2V569.3M269.5 563.2V568.9M270.5 564.3V570.5M271.5 565.9V574.0M272.5 567.0V576.4M273.5 564.9V575.1M274.5 569.2V577.9M275.5 567.4V578.0M276.5 570.5V576.5M277.5 570.2V578.9M278.5 569.0V580.2M279.5 571.7V581.0M280.5 570.4V580.1M281.5 570.6V577.7M282.5 567.7V580.9M283.5 567.8V579.4M284.5 566.8V575.3M285.5 566.5V576.4M286.5 568.4V579.1M287.5 566.5V576.1M288.5 564.6V574.5M289.5 566.8V574.4M290.5 564.5V575.5M291.5 563.3V577.2M292.5 565.0V578.5M293.5 561.5V575.5M294.5 560.4V577.7M295.5 558.4V571.7M296.5 555.1V568.1M297.5 556.5V564.5M298.5 549.9V564.7M299.5 553.1V561.3M300.5 551.1V561.2M301.5 548.0V559.7M302.5 545.7V561.0M303.5 549.2V559.7M304.5 546.9V556.9M305.5 543.1V560.3M306.5 545.8V557.0M307.5 538.6V555.3M308.5 544.5V558.5M309.5 542.4V557.9M310.5 547.5V563.7M311.5 547.7V562.6M312.5 552.8V574.8M313.5 549.0V571.6M314.5 548.5V569.0M315.5 556.4V573.9M316.5 550.1V562.3M317.5 550.0V563.5M318.5 545.1V555.0M319.5 542.9V551.1M320.5 534.5V547.5M321.5 534.6V548.1M322.5 523.8V541.4M323.5 525.0V538.8M324.5 516.2V536.6M325.5 518.7V532.4M326.5 513.3V530.6M327.5 511.3V520.9M328.5 502.2V523.0M329.5 503.3V522.2M330.5 496.8V520.7M331.5 495.2V513.2M332.5 484.0V511.0M333.5 483.6V502.3M334.5 471.4V514.6M335.5 464.3V496.9M336.5 474.0V494.4M337.5 476.1V498.5M338.5 469.2V493.9M339.5 475.2V499.0M340.5 481.2V494.2M341.5 480.2V498.1M342.5 478.8V497.0M343.5 482.3V505.4M344.5 473.2V496.3M345.5 474.6V491.7M346.5 474.4V492.6M347.5 474.8V492.8M348.5 470.0V498.0M349.5 479.1V499.2M350.5 481.7V500.5M351.5 468.6V505.7M352.5 486.9V514.4M353.5 490.4V512.4M354.5 483.5V522.5M355.5 494.5V525.0M356.5 508.9V525.6M357.5 507.9V534.9M358.5 528.1V548.4M359.5 548.4V569.2M360.5 565.0V576.1M361.5 566.1V573.3M372.5 557.7V562.6M373.5 494.1V557.7M374.5 488.3V518.6M375.5 481.1V504.8M376.5 487.0V501.7M377.5 481.6V500.8M378.5 484.8V504.5M379.5 478.0V495.5M380.5 482.2V501.8M381.5 472.2V499.0M382.5 478.7V495.5M383.5 475.1V490.2M384.5 469.2V491.2M385.5 472.5V494.0M386.5 470.1V490.4M387.5 467.2V486.0M388.5 466.0V485.1M389.5 457.6V488.2M390.5 459.7V493.7M391.5 449.0V496.1M392.5 467.1V490.9M393.5 451.9V519.0M394.5 453.5V502.0M395.5 455.3V484.9M396.5 455.6V474.9M397.5 464.9V478.0M398.5 463.1V480.6M399.5 475.3V490.8M400.5 478.8V489.4M401.5 476.8V495.5M402.5 480.4V499.5M403.5 486.1V502.3M404.5 490.8V501.2M405.5 489.2V498.1M406.5 489.0V505.2M407.5 488.9V497.5M408.5 483.2V497.7M409.5 479.5V499.8M410.5 480.7V494.9M411.5 473.0V495.7M412.5 473.1V488.8M413.5 470.8V486.7M414.5 472.0V489.2M415.5 473.2V484.7M416.5 476.9V486.0M417.5 477.0V491.8M418.5 476.8V489.1M419.5 482.5V491.3M420.5 482.7V493.1M421.5 485.8V495.8M422.5 488.2V500.7M423.5 490.2V501.1M424.5 482.8V512.5M425.5 487.5V508.4M426.5 494.7V510.7M427.5 491.7V506.7M428.5 491.5V510.5M429.5 496.8V505.1M430.5 495.1V510.2M431.5 493.3V512.1M432.5 495.6V513.3M433.5 495.1V513.3M434.5 490.9V510.3M435.5 497.2V513.6M436.5 493.6V513.2M437.5 498.2V511.6M438.5 497.3V506.8M439.5 493.8V511.3M440.5 497.8V510.2M441.5 496.0V509.1M442.5 496.9V508.9M443.5 494.7V508.9M444.5 489.6V509.1M445.5 485.4V508.1M446.5 491.2V503.8M447.5 487.6V507.8M448.5 493.7V505.9M449.5 486.7V504.0M450.5 488.1V504.9M451.5 489.0V508.7M452.5 489.8V506.7M453.5 493.7V505.2M454.5 489.0V507.5M455.5 491.1V507.8M456.5 489.6V501.2M457.5 479.0V496.9M458.5 479.6V495.2M459.5 479.9V495.7M460.5 480.2V496.2M461.5 480.7V497.0M462.5 489.1V508.1M463.5 487.0V506.3M464.5 487.4V514.3M465.5 500.7V513.4M466.5 503.8V517.7M467.5 501.9V514.6M468.5 504.1V520.9M469.5 508.6V520.7M470.5 506.7V525.5M471.5 507.0V518.6M472.5 503.0V516.6M473.5 496.2V513.1M474.5 489.5V510.6M475.5 491.4V514.8M476.5 489.5V511.2M477.5 493.3V507.3M478.5 490.8V507.8M479.5 490.4V502.4M480.5 493.2V504.3M481.5 490.2V513.2M482.5 492.1V515.1M483.5 497.5V512.0M484.5 509.3V522.4M485.5 507.0V536.2M486.5 524.2V546.8M487.5 531.7V554.0M488.5 516.4V546.6M489.5 516.2V536.3M490.5 505.1V535.2M491.5 491.9V538.0M492.5 501.4V520.0M493.5 497.5V528.2M494.5 491.2V511.3M495.5 484.5V516.7M496.5 482.9V506.8M497.5 478.6V507.9M498.5 480.8V507.1M499.5 482.1V506.6M500.5 481.8V497.4M501.5 475.3V497.0M502.5 482.5V499.2M503.5 478.3V500.3M504.5 486.1V495.1M505.5 483.8V496.7M506.5 481.1V505.4M507.5 470.5V492.4M508.5 476.0V496.7M509.5 471.8V498.1M510.5 470.3V488.7M511.5 473.3V489.4M512.5 472.1V508.1M513.5 480.4V503.9M514.5 494.5V515.5M515.5 496.8V513.8M516.5 492.6V519.2M517.5 503.9V518.3M518.5 505.1V526.5M519.5 518.2V537.2M520.5 527.0V542.1M521.5 542.1V554.6M522.5 553.2V561.2M534.5 552.8V568.8M535.5 534.4V554.3M536.5 513.4V542.6M537.5 510.2V527.8M538.5 497.6V524.0M539.5 492.2V518.6M540.5 497.4V516.7M541.5 491.3V518.1M542.5 490.2V514.1M543.5 482.8V502.9M544.5 479.5V498.5M545.5 475.3V505.0M546.5 459.8V499.3M547.5 464.5V495.5M548.5 472.6V490.4M549.5 469.2V497.3M550.5 469.6V493.4M551.5 482.7V506.2M552.5 481.5V506.7M553.5 486.0V507.5M554.5 497.8V516.6M555.5 507.7V520.8M556.5 513.2V527.8M557.5 515.1V543.5M558.5 514.4V536.5M559.5 518.3V552.2M560.5 520.1V552.4M561.5 528.3V556.0M562.5 530.4V556.6M563.5 530.4V550.5M564.5 535.2V570.2M565.5 536.2V563.1M566.5 539.1V560.7M567.5 545.6V565.8M568.5 546.9V567.2M569.5 553.9V577.2M570.5 561.2V580.0M571.5 558.7V580.4M572.5 562.4V586.6M573.5 575.3V591.3M574.5 569.1V594.7M575.5 576.1V593.1M576.5 574.9V597.4M577.5 572.4V589.5M578.5 568.2V595.7M579.5 575.3V595.3M580.5 572.2V594.9M581.5 578.2V598.3M582.5 582.0V600.8M583.5 576.2V594.5M584.5 574.6V594.3M585.5 582.0V604.7M586.5 575.9V593.4M587.5 577.5V599.6M588.5 578.0V596.4M589.5 581.6V594.1M590.5 576.4V594.6M591.5 583.9V596.3M592.5 583.1V600.3M593.5 586.5V604.6M594.5 584.3V606.8M595.5 586.3V603.9M596.5 585.2V611.1M597.5 581.9V608.7M598.5 587.1V603.4M599.5 585.8V603.4M600.5 585.7V605.0M601.5 583.0V607.7M602.5 583.0V597.7M603.5 576.0V597.7M604.5 573.4V592.3M605.5 578.5V594.8M606.5 572.9V589.4M607.5 576.5V590.7M608.5 571.4V591.3M609.5 574.5V587.2M610.5 575.6V590.2M611.5 570.1V587.7M612.5 568.3V585.8M613.5 572.8V588.4M614.5 565.1V585.8M615.5 569.3V583.0M616.5 570.9V582.3M617.5 570.6V580.6M618.5 564.3V581.1M619.5 567.3V577.6M620.5 564.2V585.7M621.5 569.2V577.3M622.5 567.1V580.4M623.5 562.4V574.6M624.5 561.3V574.7M625.5 560.4V573.3M626.5 561.8V572.6M627.5 555.1V568.9M628.5 557.5V574.2M629.5 555.0V565.4M630.5 553.1V567.5M631.5 547.7V566.4M632.5 548.7V562.6M633.5 542.9V557.0M634.5 540.3V557.8M635.5 540.2V553.1M636.5 529.0V547.4M637.5 525.3V542.1M638.5 523.4V537.1M639.5 519.5V543.1M640.5 532.6V549.9M641.5 543.2V559.6M642.5 547.0V569.5M643.5 549.9V570.5M644.5 552.5V571.2M645.5 553.5V580.5M646.5 549.7V572.6M647.5 553.1V585.3M648.5 548.3V580.6M649.5 554.2V582.4M650.5 550.5V583.9M651.5 563.1V588.0M652.5 554.9V586.9M653.5 560.7V582.3M654.5 558.4V578.1M655.5 554.7V578.9M656.5 550.9V571.9M657.5 542.7V568.2M658.5 535.1V564.1M659.5 526.8V555.3M660.5 529.8V552.1M661.5 525.0V558.1M662.5 525.0V555.9M663.5 517.5V543.8M664.5 514.3V533.8M665.5 510.7V532.5M666.5 495.5V532.4M667.5 487.8V520.7M668.5 494.4V525.2M669.5 507.8V542.0M670.5 490.4V537.0M671.5 492.9V533.3M672.5 482.0V532.3M673.5 491.8V535.1M674.5 504.5V528.2M675.5 493.3V524.2M676.5 493.6V532.0M677.5 502.1V525.6M678.5 501.5V528.9M679.5 506.3V539.9M680.5 505.1V539.0M681.5 514.6V557.2M682.5 539.3V557.6M683.5 546.7V568.1M684.5 564.8V583.2M670.5 520V595M396.5 470V449" stroke="#000" stroke-width="1" fill="none" shape-rendering="crispEdges"/></svg><div class="a" style="left:346px;top:358px;width:246px;height:89px;background:#d0d0d0;border:1px solid #9a9a9a;border-radius:6px 6px 0 0"></div><div class="a" style="left:347px;top:359px;width:244px;height:25px;background:linear-gradient(#eaeaea,#d2d2d2);border-radius:5px 5px 0 0"></div><svg class="a" style="left:359px;top:369px" width="12" height="8"><path d="M1 1 L9.5 1 L5.25 6 Z" fill="#a0a0a0"/></svg><svg class="a" style="left:568px;top:368px" width="10" height="10"><path d="M1.5 1.5L8.5 8.5M8.5 1.5L1.5 8.5" stroke="#9a9a9a" stroke-width="2"/></svg><div class="t" style="left:411.50px;top:366.37px;font-size:13.5px;color:#737373;font-weight:bold;transform:scaleX(1.0208);transform-origin:0 0;">Progress Monitor</div><div class="a" style="left:349px;top:384px;width:240px;height:62px;background:#fdfdfd"></div><div class="t" style="left:414.40px;top:383.90px;font-size:15px;color:#20202e;font-weight:bold;transform:scaleX(1.0893);transform-origin:0 0;">running batch</div><div class="t" style="left:362.85px;top:401.26px;font-size:9.5px;color:#101018;transform:scaleX(1.1098);transform-origin:0 0;-webkit-text-stroke:0.25px #101018;">write /hom...walk3/product_20121217_00.png</div><div class="a" style="left:349px;top:411px;width:220px;height:20px;background:#ececec;border:1px solid #6f86a6"></div><div class="a" style="left:350px;top:412px;width:116px;height:18px;background:#a2b5cb"></div><div class="a" style="left:569px;top:411px;width:20px;height:20px;background:#d9e4ef;border:1px solid #8fa3b8"></div><div class="a" style="left:572px;top:414px;width:14px;height:14px;background:linear-gradient(#f06a6a,#c82a2a);border:1px solid #a01818;border-radius:3px"></div><svg class="a" style="left:574px;top:416px" width="10" height="10"><path d="M2 2L8 8M8 2L2 8" stroke="#fff" stroke-width="2.2"/></svg><div class="t" style="left:376.70px;top:431.17px;font-size:13.5px;color:#20202e;font-weight:bold;transform:scaleX(1.0931);transform-origin:0 0;">33/62 (48.7/min, eta 37.0 s)</div></body></html>
